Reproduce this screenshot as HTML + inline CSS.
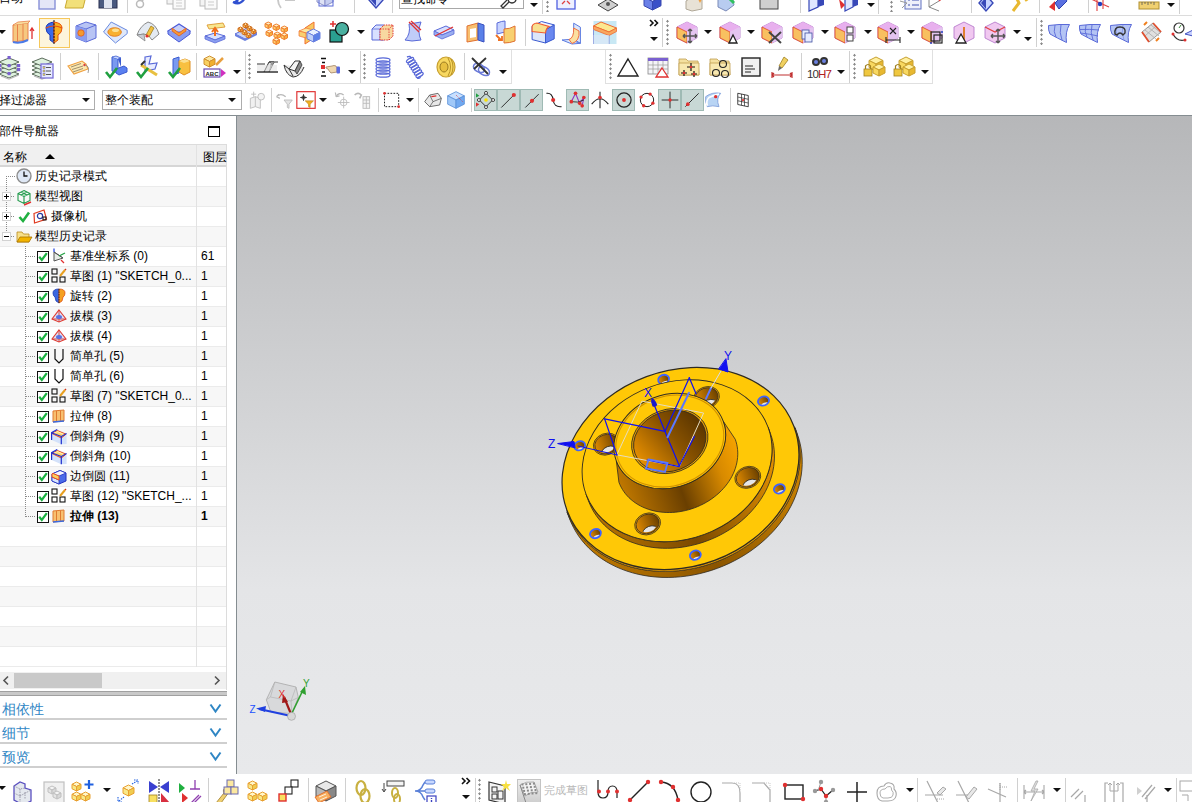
<!DOCTYPE html><html><head><meta charset="utf-8"><style>
*{box-sizing:border-box}
html,body{margin:0;padding:0}
body{width:1192px;height:802px;overflow:hidden;position:relative;background:#fff;font-family:"Liberation Sans",sans-serif;font-size:12px;color:#000}
.a{position:absolute}
.hl{position:absolute;height:1px;background:#dadada}
.vl{position:absolute;width:1px;background:#d4d4d4}
.ic{position:absolute;overflow:visible}
.dd{position:absolute;width:0;height:0;border-left:4px solid transparent;border-right:4px solid transparent;border-top:4px solid #111}
.grip{position:absolute;width:3px;background-image:radial-gradient(circle,#8a8a8a 1px,transparent 1.3px);background-size:3px 4.5px}
.row{position:absolute;left:0;width:226px;height:20px;border-bottom:1px solid #ececec}
.t{position:absolute;white-space:nowrap;line-height:14px}
.sel{position:absolute;background:#c8d8d5;border:1px solid #9fbab4}
</style></head><body>
<svg class="a" style="left:0;top:0" width="1192" height="802" viewBox="0 0 1192 802">
<defs>
<linearGradient id="vpg" x1="0" y1="116" x2="0" y2="774" gradientUnits="userSpaceOnUse"><stop offset="0" stop-color="#b6b7b9"/><stop offset="0.72" stop-color="#e4e5e7"/><stop offset="1" stop-color="#e8e9eb"/></linearGradient>
<linearGradient id="rimg" x1="566.9" y1="517.5" x2="797.6" y2="432.1" gradientUnits="userSpaceOnUse"><stop offset="0" stop-color="#c07a00"/><stop offset="0.5" stop-color="#8a5400"/><stop offset="1" stop-color="#d08600"/></linearGradient>
<linearGradient id="stepg" x1="588.5" y1="501.0" x2="770.5" y2="433.6" gradientUnits="userSpaceOnUse"><stop offset="0" stop-color="#b87400"/><stop offset="0.45" stop-color="#7a4800"/><stop offset="1" stop-color="#e89400"/></linearGradient>
<linearGradient id="hubg" x1="618.9" y1="482.3" x2="735.2" y2="439.2" gradientUnits="userSpaceOnUse"><stop offset="0" stop-color="#c07800"/><stop offset="0.45" stop-color="#6a3f00"/><stop offset="0.8" stop-color="#d88a00"/><stop offset="1" stop-color="#f5a200"/></linearGradient>
<linearGradient id="boreg" x1="635.1" y1="453.9" x2="704.5" y2="428.2" gradientUnits="userSpaceOnUse"><stop offset="0" stop-color="#e89000"/><stop offset="0.55" stop-color="#8a5300"/><stop offset="1" stop-color="#5a3500"/></linearGradient>
<linearGradient id="holeg" x1="0" y1="0" x2="1" y2="0"><stop offset="0" stop-color="#e08a00"/><stop offset="1" stop-color="#6a4000"/></linearGradient>
</defs>
<rect x="237" y="116" width="955" height="658" fill="url(#vpg)"/>
<path d="M794.97,427.73 L796.60,432.62 L797.91,437.61 L798.91,442.69 L799.58,447.84 L799.93,453.06 L799.95,458.32 L799.64,463.61 L799.01,468.92 L798.06,474.23 L796.78,479.53 L795.19,484.80 L793.28,490.04 L791.07,495.21 L788.56,500.32 L785.75,505.35 L782.65,510.27 L779.28,515.09 L775.63,519.79 L771.73,524.34 L767.58,528.75 L763.19,533.00 L758.57,537.07 L753.75,540.96 L748.72,544.65 L743.51,548.14 L738.13,551.42 L732.59,554.47 L726.91,557.29 L721.10,559.87 L715.18,562.20 L709.17,564.28 L703.08,566.11 L696.94,567.66 L690.75,568.95 L684.53,569.97 L678.30,570.72 L672.08,571.19 L665.88,571.38 L659.73,571.29 L653.63,570.92 L647.61,570.28 L641.68,569.37 L635.86,568.18 L630.16,566.72 L624.61,564.99 L619.20,563.01 L613.97,560.77 L608.92,558.28 L604.06,555.55 L599.42,552.58 L595.00,549.39 L590.82,545.98 L586.89,542.36 L583.21,538.54 L579.80,534.53 L576.67,530.35 L573.82,526.00 L571.27,521.50 L569.02,516.85 L567.08,512.08 L569.33,518.18 L571.28,522.95 L573.53,527.59 L576.08,532.10 L578.92,536.45 L582.06,540.63 L585.47,544.63 L589.14,548.45 L593.08,552.07 L597.26,555.48 L601.68,558.68 L606.32,561.64 L611.17,564.37 L616.22,566.86 L621.46,569.10 L626.86,571.09 L632.42,572.81 L638.12,574.27 L643.94,575.46 L649.87,576.38 L655.89,577.02 L661.99,577.39 L668.14,577.47 L674.34,577.28 L680.56,576.81 L686.78,576.07 L693.00,575.05 L699.19,573.76 L705.34,572.20 L711.43,570.38 L717.44,568.30 L723.36,565.96 L729.16,563.38 L734.84,560.56 L740.38,557.51 L745.77,554.24 L750.98,550.75 L756.00,547.05 L760.83,543.16 L765.45,539.09 L769.83,534.85 L773.99,530.44 L777.89,525.88 L781.53,521.19 L784.91,516.37 L788.00,511.44 L790.81,506.42 L793.33,501.31 L795.54,496.13 L797.45,490.90 L799.04,485.63 L800.31,480.33 L801.27,475.01 L801.90,469.70 L802.20,464.41 L802.18,459.15 L801.83,453.94 L801.16,448.78 L800.17,443.71 L798.85,438.72 L797.22,433.83Z" fill="url(#rimg)" stroke="#2e2a22" stroke-width="0.8"/>
<path d="M793.98,426.50 L795.60,431.37 L796.91,436.34 L797.90,441.39 L798.57,446.53 L798.92,451.72 L798.94,456.96 L798.63,462.23 L798.00,467.52 L797.05,472.81 L795.78,478.08 L794.20,483.34 L792.30,488.55 L790.10,493.70 L787.59,498.79 L784.80,503.79 L781.71,508.70 L778.35,513.50 L774.72,518.17 L770.84,522.71 L766.70,527.10 L762.33,531.33 L757.74,535.39 L752.93,539.26 L747.92,542.94 L742.73,546.41 L737.37,549.67 L731.85,552.71 L726.20,555.52 L720.41,558.09 L714.52,560.42 L708.54,562.49 L702.47,564.30 L696.35,565.85 L690.18,567.14 L683.99,568.15 L677.79,568.90 L671.60,569.36 L665.43,569.55 L659.30,569.47 L653.23,569.10 L647.23,568.46 L641.32,567.55 L635.53,566.36 L629.85,564.91 L624.32,563.19 L618.94,561.22 L613.72,558.99 L608.69,556.51 L603.86,553.79 L599.24,550.83 L594.84,547.65 L590.67,544.26 L586.75,540.65 L583.09,536.85 L579.70,532.86 L576.58,528.69 L573.74,524.36 L571.20,519.88 L568.96,515.25 L567.02,510.50 L567.08,512.08 L569.02,516.85 L571.27,521.50 L573.82,526.00 L576.67,530.35 L579.80,534.53 L583.21,538.54 L586.89,542.36 L590.82,545.98 L595.00,549.39 L599.42,552.58 L604.06,555.55 L608.92,558.28 L613.97,560.77 L619.20,563.01 L624.61,564.99 L630.16,566.72 L635.86,568.18 L641.68,569.37 L647.61,570.28 L653.63,570.92 L659.73,571.29 L665.88,571.38 L672.08,571.19 L678.30,570.72 L684.53,569.97 L690.75,568.95 L696.94,567.66 L703.08,566.11 L709.17,564.28 L715.18,562.20 L721.10,559.87 L726.91,557.29 L732.59,554.47 L738.13,551.42 L743.51,548.14 L748.72,544.65 L753.75,540.96 L758.57,537.07 L763.19,533.00 L767.58,528.75 L771.73,524.34 L775.63,519.79 L779.28,515.09 L782.65,510.27 L785.75,505.35 L788.56,500.32 L791.07,495.21 L793.28,490.04 L795.19,484.80 L796.78,479.53 L798.06,474.23 L799.01,468.92 L799.64,463.61 L799.95,458.32 L799.93,453.06 L799.58,447.84 L798.91,442.69 L797.91,437.61 L796.60,432.62 L794.97,427.73Z" fill="#e69a00" stroke="#2e2a22" stroke-width="0.6"/>
<ellipse cx="680.50" cy="468.50" rx="121.00" ry="98.01" transform="rotate(-20.31 680.50 468.50)" fill="#ffc806" stroke="#2e2a22" stroke-width="1.2" />
<clipPath id="sh0"><ellipse cx="663.62" cy="379.45" rx="5.20" ry="4.21" transform="rotate(-20.31 663.62 379.45)" fill="#000" stroke="none" stroke-width="1" /></clipPath>
<ellipse cx="663.62" cy="379.45" rx="5.20" ry="4.21" transform="rotate(-20.31 663.62 379.45)" fill="url(#holeg)" stroke="none" stroke-width="0" />
<g clip-path="url(#sh0)"><ellipse cx="665.52" cy="384.61" rx="4.50" ry="3.65" transform="rotate(-20.31 665.52 384.61)" fill="#e2e3e5" stroke="none" stroke-width="0" /></g>
<ellipse cx="663.62" cy="379.45" rx="5.60" ry="4.54" transform="rotate(-20.31 663.62 379.45)" fill="none" stroke="#3d63ff" stroke-width="1.8" />
<clipPath id="sh1"><ellipse cx="763.49" cy="401.02" rx="5.20" ry="4.21" transform="rotate(-20.31 763.49 401.02)" fill="#000" stroke="none" stroke-width="1" /></clipPath>
<ellipse cx="763.49" cy="401.02" rx="5.20" ry="4.21" transform="rotate(-20.31 763.49 401.02)" fill="url(#holeg)" stroke="none" stroke-width="0" />
<g clip-path="url(#sh1)"><ellipse cx="765.40" cy="406.17" rx="4.50" ry="3.65" transform="rotate(-20.31 765.40 406.17)" fill="#e2e3e5" stroke="none" stroke-width="0" /></g>
<ellipse cx="763.49" cy="401.02" rx="5.60" ry="4.54" transform="rotate(-20.31 763.49 401.02)" fill="none" stroke="#3d63ff" stroke-width="1.8" />
<clipPath id="sh2"><ellipse cx="779.37" cy="488.86" rx="5.20" ry="4.21" transform="rotate(-20.31 779.37 488.86)" fill="#000" stroke="none" stroke-width="1" /></clipPath>
<ellipse cx="779.37" cy="488.86" rx="5.20" ry="4.21" transform="rotate(-20.31 779.37 488.86)" fill="url(#holeg)" stroke="none" stroke-width="0" />
<g clip-path="url(#sh2)"><ellipse cx="781.28" cy="494.02" rx="4.50" ry="3.65" transform="rotate(-20.31 781.28 494.02)" fill="#e2e3e5" stroke="none" stroke-width="0" /></g>
<ellipse cx="779.37" cy="488.86" rx="5.60" ry="4.54" transform="rotate(-20.31 779.37 488.86)" fill="none" stroke="#3d63ff" stroke-width="1.8" />
<clipPath id="sh3"><ellipse cx="695.38" cy="555.15" rx="5.20" ry="4.21" transform="rotate(-20.31 695.38 555.15)" fill="#000" stroke="none" stroke-width="1" /></clipPath>
<ellipse cx="695.38" cy="555.15" rx="5.20" ry="4.21" transform="rotate(-20.31 695.38 555.15)" fill="url(#holeg)" stroke="none" stroke-width="0" />
<g clip-path="url(#sh3)"><ellipse cx="697.29" cy="560.30" rx="4.50" ry="3.65" transform="rotate(-20.31 697.29 560.30)" fill="#e2e3e5" stroke="none" stroke-width="0" /></g>
<ellipse cx="695.38" cy="555.15" rx="5.60" ry="4.54" transform="rotate(-20.31 695.38 555.15)" fill="none" stroke="#3d63ff" stroke-width="1.8" />
<clipPath id="sh4"><ellipse cx="595.51" cy="533.58" rx="5.20" ry="4.21" transform="rotate(-20.31 595.51 533.58)" fill="#000" stroke="none" stroke-width="1" /></clipPath>
<ellipse cx="595.51" cy="533.58" rx="5.20" ry="4.21" transform="rotate(-20.31 595.51 533.58)" fill="url(#holeg)" stroke="none" stroke-width="0" />
<g clip-path="url(#sh4)"><ellipse cx="597.42" cy="538.74" rx="4.50" ry="3.65" transform="rotate(-20.31 597.42 538.74)" fill="#e2e3e5" stroke="none" stroke-width="0" /></g>
<ellipse cx="595.51" cy="533.58" rx="5.60" ry="4.54" transform="rotate(-20.31 595.51 533.58)" fill="none" stroke="#3d63ff" stroke-width="1.8" />
<clipPath id="sh5"><ellipse cx="579.63" cy="445.74" rx="5.20" ry="4.21" transform="rotate(-20.31 579.63 445.74)" fill="#000" stroke="none" stroke-width="1" /></clipPath>
<ellipse cx="579.63" cy="445.74" rx="5.20" ry="4.21" transform="rotate(-20.31 579.63 445.74)" fill="url(#holeg)" stroke="none" stroke-width="0" />
<g clip-path="url(#sh5)"><ellipse cx="581.54" cy="450.90" rx="4.50" ry="3.65" transform="rotate(-20.31 581.54 450.90)" fill="#e2e3e5" stroke="none" stroke-width="0" /></g>
<ellipse cx="579.63" cy="445.74" rx="5.60" ry="4.54" transform="rotate(-20.31 579.63 445.74)" fill="none" stroke="#3d63ff" stroke-width="1.8" />
<path d="M768.04,427.06 L769.34,430.97 L770.39,434.95 L771.19,439.01 L771.72,443.12 L772.00,447.28 L772.01,451.48 L771.77,455.71 L771.27,459.95 L770.51,464.19 L769.49,468.42 L768.22,472.63 L766.70,476.81 L764.93,480.94 L762.92,485.02 L760.68,489.03 L758.21,492.96 L755.51,496.81 L752.60,500.56 L749.49,504.19 L746.17,507.71 L742.67,511.10 L738.99,514.35 L735.13,517.46 L731.12,520.41 L726.96,523.19 L722.66,525.81 L718.24,528.25 L713.70,530.50 L709.07,532.56 L704.34,534.42 L699.55,536.08 L694.69,537.54 L689.78,538.78 L684.83,539.81 L679.87,540.62 L674.90,541.22 L669.93,541.59 L664.99,541.74 L660.07,541.67 L655.21,541.38 L650.40,540.87 L645.66,540.14 L641.02,539.19 L636.47,538.02 L632.03,536.65 L627.72,535.06 L623.54,533.27 L619.51,531.29 L615.63,529.11 L611.93,526.74 L608.40,524.19 L605.06,521.47 L601.92,518.58 L598.98,515.53 L596.26,512.33 L593.76,508.99 L591.49,505.52 L589.45,501.92 L587.65,498.22 L586.10,494.41 L588.53,500.97 L590.08,504.78 L591.88,508.49 L593.92,512.08 L596.19,515.55 L598.69,518.89 L601.41,522.09 L604.35,525.14 L607.49,528.03 L610.83,530.75 L614.36,533.30 L618.06,535.67 L621.94,537.85 L625.97,539.84 L630.15,541.63 L634.46,543.21 L638.90,544.59 L643.45,545.75 L648.09,546.70 L652.83,547.44 L657.64,547.95 L662.50,548.24 L667.42,548.31 L672.36,548.16 L677.33,547.78 L682.30,547.19 L687.26,546.37 L692.21,545.34 L697.12,544.10 L701.98,542.65 L706.77,540.98 L711.50,539.12 L716.13,537.06 L720.67,534.81 L725.09,532.37 L729.39,529.76 L733.55,526.97 L737.56,524.02 L741.42,520.92 L745.10,517.67 L748.60,514.28 L751.92,510.76 L755.03,507.12 L757.94,503.37 L760.64,499.53 L763.11,495.59 L765.35,491.58 L767.36,487.50 L769.13,483.37 L770.65,479.19 L771.92,474.98 L772.94,470.75 L773.70,466.51 L774.20,462.27 L774.44,458.05 L774.43,453.85 L774.15,449.68 L773.62,445.57 L772.82,441.52 L771.77,437.53 L770.47,433.63Z" fill="url(#stepg)" stroke="#2e2a22" stroke-width="0.8"/>
<ellipse cx="677.07" cy="460.74" rx="97.00" ry="78.57" transform="rotate(-20.31 677.07 460.74)" fill="#ffc806" stroke="#2e2a22" stroke-width="0.9" />
<clipPath id="lh0"><ellipse cx="606.35" cy="444.13" rx="10.00" ry="8.10" transform="rotate(-20.31 606.35 444.13)" fill="#000" stroke="none" stroke-width="1" /></clipPath>
<ellipse cx="606.35" cy="444.13" rx="13.20" ry="10.69" transform="rotate(-20.31 606.35 444.13)" fill="#f0a400" stroke="#2e2a22" stroke-width="0.7" />
<ellipse cx="606.35" cy="444.13" rx="11.80" ry="9.56" transform="rotate(-20.31 606.35 444.13)" fill="url(#holeg)" stroke="#2e2a22" stroke-width="0.7" />
<g clip-path="url(#lh0)"><ellipse cx="609.82" cy="453.51" rx="9.00" ry="7.29" transform="rotate(-20.31 609.82 453.51)" fill="#e4e5e7" stroke="#2e2a22" stroke-width="0.8" /></g>
<clipPath id="lh1"><ellipse cx="706.50" cy="397.54" rx="10.00" ry="8.10" transform="rotate(-20.31 706.50 397.54)" fill="#000" stroke="none" stroke-width="1" /></clipPath>
<ellipse cx="706.50" cy="397.54" rx="13.20" ry="10.69" transform="rotate(-20.31 706.50 397.54)" fill="#f0a400" stroke="#2e2a22" stroke-width="0.7" />
<ellipse cx="706.50" cy="397.54" rx="11.80" ry="9.56" transform="rotate(-20.31 706.50 397.54)" fill="url(#holeg)" stroke="#2e2a22" stroke-width="0.7" />
<g clip-path="url(#lh1)"><ellipse cx="709.97" cy="406.91" rx="9.00" ry="7.29" transform="rotate(-20.31 709.97 406.91)" fill="#e4e5e7" stroke="#2e2a22" stroke-width="0.8" /></g>
<clipPath id="lh2"><ellipse cx="747.79" cy="477.34" rx="10.00" ry="8.10" transform="rotate(-20.31 747.79 477.34)" fill="#000" stroke="none" stroke-width="1" /></clipPath>
<ellipse cx="747.79" cy="477.34" rx="13.20" ry="10.69" transform="rotate(-20.31 747.79 477.34)" fill="#f0a400" stroke="#2e2a22" stroke-width="0.7" />
<ellipse cx="747.79" cy="477.34" rx="11.80" ry="9.56" transform="rotate(-20.31 747.79 477.34)" fill="url(#holeg)" stroke="#2e2a22" stroke-width="0.7" />
<g clip-path="url(#lh2)"><ellipse cx="751.27" cy="486.72" rx="9.00" ry="7.29" transform="rotate(-20.31 751.27 486.72)" fill="#e4e5e7" stroke="#2e2a22" stroke-width="0.8" /></g>
<clipPath id="lh3"><ellipse cx="647.64" cy="523.93" rx="10.00" ry="8.10" transform="rotate(-20.31 647.64 523.93)" fill="#000" stroke="none" stroke-width="1" /></clipPath>
<ellipse cx="647.64" cy="523.93" rx="13.20" ry="10.69" transform="rotate(-20.31 647.64 523.93)" fill="#f0a400" stroke="#2e2a22" stroke-width="0.7" />
<ellipse cx="647.64" cy="523.93" rx="11.80" ry="9.56" transform="rotate(-20.31 647.64 523.93)" fill="url(#holeg)" stroke="#2e2a22" stroke-width="0.7" />
<g clip-path="url(#lh3)"><ellipse cx="651.11" cy="533.31" rx="9.00" ry="7.29" transform="rotate(-20.31 651.11 533.31)" fill="#e4e5e7" stroke="#2e2a22" stroke-width="0.8" /></g>
<path d="M723.24,421.26 L724.00,423.55 L724.62,425.89 L725.09,428.27 L725.40,430.69 L725.56,433.14 L725.57,435.60 L725.43,438.09 L725.13,440.58 L724.69,443.07 L724.09,445.56 L723.34,448.03 L722.45,450.48 L721.41,452.91 L720.23,455.31 L718.91,457.67 L717.46,459.98 L715.88,462.24 L714.17,464.44 L712.34,466.58 L710.39,468.65 L708.33,470.64 L706.16,472.55 L703.90,474.37 L701.54,476.11 L699.10,477.74 L696.57,479.28 L693.97,480.71 L691.31,482.03 L688.58,483.25 L685.81,484.34 L682.99,485.32 L680.13,486.17 L677.25,486.90 L674.34,487.51 L671.43,487.99 L668.50,488.34 L665.59,488.55 L662.68,488.64 L659.79,488.60 L656.93,488.43 L654.11,488.13 L651.33,487.70 L648.59,487.14 L645.92,486.46 L643.31,485.65 L640.78,484.72 L638.32,483.67 L635.95,482.50 L633.68,481.22 L631.50,479.83 L629.43,478.33 L627.46,476.73 L625.62,475.03 L623.89,473.24 L622.29,471.36 L620.83,469.40 L619.49,467.36 L618.29,465.24 L617.24,463.07 L616.32,460.83 L618.93,482.26 L619.92,484.69 L621.07,487.06 L622.37,489.36 L623.82,491.58 L625.42,493.71 L627.16,495.76 L629.03,497.71 L631.04,499.55 L633.18,501.29 L635.43,502.92 L637.80,504.44 L640.28,505.83 L642.85,507.10 L645.52,508.24 L648.28,509.26 L651.12,510.14 L654.03,510.88 L657.00,511.49 L660.02,511.96 L663.09,512.28 L666.21,512.47 L669.35,512.51 L672.51,512.42 L675.68,512.18 L678.86,511.80 L682.03,511.28 L685.19,510.62 L688.33,509.82 L691.44,508.89 L694.50,507.83 L697.52,506.64 L700.48,505.32 L703.38,503.89 L706.21,502.33 L708.96,500.66 L711.62,498.88 L714.18,496.99 L716.65,495.01 L719.00,492.93 L721.24,490.76 L723.36,488.51 L725.35,486.19 L727.21,483.79 L728.93,481.33 L730.51,478.82 L731.94,476.26 L733.23,473.65 L734.36,471.01 L735.33,468.34 L736.14,465.65 L736.79,462.94 L737.28,460.23 L737.60,457.52 L737.76,454.82 L737.75,452.14 L737.57,449.48 L737.23,446.85 L736.72,444.25 L736.05,441.71 L735.21,439.21Z" fill="url(#hubg)" stroke="#2e2a22" stroke-width="0.8"/>
<ellipse cx="669.78" cy="441.04" rx="57.00" ry="46.17" transform="rotate(-20.31 669.78 441.04)" fill="#ffc806" stroke="#2e2a22" stroke-width="0.9" />
<ellipse cx="669.78" cy="441.04" rx="55.00" ry="44.55" transform="rotate(-20.31 669.78 441.04)" fill="none" stroke="#d09000" stroke-width="1.1" />
<ellipse cx="669.78" cy="441.04" rx="39.00" ry="31.59" transform="rotate(-20.31 669.78 441.04)" fill="#e9a000" stroke="#2e2a22" stroke-width="0.8" />
<ellipse cx="669.78" cy="441.04" rx="37.00" ry="29.97" transform="rotate(-20.31 669.78 441.04)" fill="url(#boreg)" stroke="#2e2a22" stroke-width="0.8" />
<g stroke-linecap="round">
<path d="M642.3,401.2 L703.6,413 L679.3,466.6 L617.2,454.9 Z" fill="none" stroke="#e6dcc0" stroke-width="1"/>
<line x1="604.6" y1="418.8" x2="665" y2="431.4" stroke="#1010f0" stroke-width="1.2"/>
<line x1="604.6" y1="418.8" x2="617" y2="455" stroke="#1010f0" stroke-width="1.2"/>
<line x1="665" y1="431.4" x2="689.3" y2="377.7" stroke="#1010f0" stroke-width="1.2"/>
<line x1="689.3" y1="377.7" x2="696" y2="393.7" stroke="#1010f0" stroke-width="1.2"/>
<line x1="665" y1="431.4" x2="679.3" y2="465.8" stroke="#1010f0" stroke-width="1.2"/>
<line x1="679.3" y1="465.8" x2="694.4" y2="436.4" stroke="#1010f0" stroke-width="1.2"/>
<line x1="647" y1="460" x2="679.3" y2="466.6" stroke="#1010f0" stroke-width="1.2"/>
<line x1="578" y1="446" x2="617" y2="455" stroke="#1010f0" stroke-width="1"/>
<line x1="665" y1="431.4" x2="653" y2="402" stroke="#1010f0" stroke-width="1.2"/>
<path d="M652,398.5 Q656,402 656.5,405 Q655,406.5 653,406 Q651,402 652,398.5 Z" fill="#1a1ac8" stroke="#1a1ac8" stroke-width="1.2"/>
<line x1="667.5" y1="437.3" x2="689" y2="392.8" stroke="#5a78ff" stroke-width="2"/>
<line x1="706" y1="398.7" x2="711" y2="388" stroke="#5a78ff" stroke-width="2"/>
<line x1="711" y1="388" x2="721" y2="371" stroke="#d8dcf0" stroke-width="1"/>
<path d="M726,359 L728,372 L719,369 Z" fill="#1010f0" stroke="#1010f0" stroke-width="1"/>
<path d="M558,443.5 L574,441.5 L575,447.5 Z" fill="#1010f0" stroke="#1010f0" stroke-width="1"/>
<path d="M648.5,459.5 L667.5,463 L665,472 L646,468.5 Z" fill="none" stroke="#5a78ff" stroke-width="1.8"/>
</g>
<text x="548" y="447.5" font-family="Liberation Sans" font-size="12" fill="#1010f0">Z</text>
<text x="644" y="397" font-family="Liberation Sans" font-size="12" fill="#1010f0">X</text>
<text x="724" y="360" font-family="Liberation Sans" font-size="12" fill="#1010f0">Y</text>
<g>
<path d="M274.8,682 L296,687 L298.3,697.4 L291.9,713.6 L270.8,712 L266.3,699.8 Z" fill="#d6d7d9" fill-opacity="0.9" stroke="#a8a8a8" stroke-width="0.8"/>
<path d="M274.8,682 L270.5,697 L291,701 L296,687 M270.5,697 L266.3,699.8 M291,701 L298.3,697.4 M291,701 L291.9,713.6" fill="none" stroke="#b4b4b4" stroke-width="0.7"/>
<line x1="291" y1="716" x2="259" y2="709" stroke="#2040e0" stroke-width="2"/>
<path d="M256,708.5 L266,706 L265,712 Z" fill="#2040e0"/>
<line x1="292" y1="713" x2="303" y2="690" stroke="#30a030" stroke-width="1.6"/>
<path d="M305,686 L306,695 L300,692 Z" fill="#30a030"/>
<line x1="291" y1="714" x2="284" y2="697" stroke="#a01818" stroke-width="2.2"/>
<path d="M283,694 L288,702 L282,703 Z" fill="#a01818"/>
<circle cx="291.5" cy="716.3" r="4" fill="#d8d8d8" stroke="#999" stroke-width="0.6"/>
<text x="249.5" y="713" font-family="Liberation Sans" font-size="10" fill="#2050ff">Z</text>
<text x="278.5" y="697.5" font-family="Liberation Sans" font-size="10" fill="#e03030">X</text>
<text x="303" y="687" font-family="Liberation Sans" font-size="10" fill="#30a030">Y</text>
</g>
</svg>
<div class="hl" style="left:0;top:15px;width:1192px;background:#dcdcdc"></div>
<div class="hl" style="left:0;top:49px;width:1192px;background:#dcdcdc"></div>
<div class="hl" style="left:0;top:83px;width:512px;background:#e0e0e0"></div>
<div class="hl" style="left:605px;top:83px;width:328px;background:#e0e0e0"></div>
<div class="vl" style="left:511px;top:50px;height:34px;background:#e0e0e0"></div>
<div class="vl" style="left:605px;top:50px;height:34px;background:#e0e0e0"></div>
<div class="vl" style="left:932px;top:50px;height:34px;background:#e0e0e0"></div>
<div class="a" style="left:0;top:115px;width:1192px;height:1px;background:#858d91"></div>
<div class="a" style="left:236px;top:116px;width:1px;height:658px;background:#858d91"></div>
<div class="t" style="left:-1px;top:123.5px;font-size:12px;color:#000;font-weight:normal;">部件导航器</div>
<div class="a" style="left:208px;top:126px;width:12px;height:11px;border:1px solid #000;border-top-width:2px"></div>
<div class="a" style="left:0;top:144px;width:227px;height:1px;background:#dcdcdc"></div>
<div class="a" style="left:226px;top:144px;width:1px;height:546px;background:#dcdcdc"></div>
<div class="a" style="left:0;top:145px;width:226px;height:21px;background:#f0f0f0"></div>
<div class="a" style="left:0;top:165px;width:226px;height:2px;background:#d6d6d6"></div>
<div class="a" style="left:0;top:167px;width:226px;height:19px;background:#ffffff"></div>
<div class="a" style="left:0;top:186px;width:226px;height:1px;background:#ebebeb"></div>
<div class="a" style="left:0;top:187px;width:226px;height:19px;background:#f7f7f7"></div>
<div class="a" style="left:0;top:206px;width:226px;height:1px;background:#ebebeb"></div>
<div class="a" style="left:0;top:207px;width:226px;height:19px;background:#ffffff"></div>
<div class="a" style="left:0;top:226px;width:226px;height:1px;background:#ebebeb"></div>
<div class="a" style="left:0;top:227px;width:226px;height:19px;background:#f7f7f7"></div>
<div class="a" style="left:0;top:246px;width:226px;height:1px;background:#ebebeb"></div>
<div class="a" style="left:0;top:247px;width:226px;height:19px;background:#ffffff"></div>
<div class="a" style="left:0;top:266px;width:226px;height:1px;background:#ebebeb"></div>
<div class="a" style="left:0;top:267px;width:226px;height:19px;background:#f7f7f7"></div>
<div class="a" style="left:0;top:286px;width:226px;height:1px;background:#ebebeb"></div>
<div class="a" style="left:0;top:287px;width:226px;height:19px;background:#ffffff"></div>
<div class="a" style="left:0;top:306px;width:226px;height:1px;background:#ebebeb"></div>
<div class="a" style="left:0;top:307px;width:226px;height:19px;background:#f7f7f7"></div>
<div class="a" style="left:0;top:326px;width:226px;height:1px;background:#ebebeb"></div>
<div class="a" style="left:0;top:327px;width:226px;height:19px;background:#ffffff"></div>
<div class="a" style="left:0;top:346px;width:226px;height:1px;background:#ebebeb"></div>
<div class="a" style="left:0;top:347px;width:226px;height:19px;background:#f7f7f7"></div>
<div class="a" style="left:0;top:366px;width:226px;height:1px;background:#ebebeb"></div>
<div class="a" style="left:0;top:367px;width:226px;height:19px;background:#ffffff"></div>
<div class="a" style="left:0;top:386px;width:226px;height:1px;background:#ebebeb"></div>
<div class="a" style="left:0;top:387px;width:226px;height:19px;background:#f7f7f7"></div>
<div class="a" style="left:0;top:406px;width:226px;height:1px;background:#ebebeb"></div>
<div class="a" style="left:0;top:407px;width:226px;height:19px;background:#ffffff"></div>
<div class="a" style="left:0;top:426px;width:226px;height:1px;background:#ebebeb"></div>
<div class="a" style="left:0;top:427px;width:226px;height:19px;background:#f7f7f7"></div>
<div class="a" style="left:0;top:446px;width:226px;height:1px;background:#ebebeb"></div>
<div class="a" style="left:0;top:447px;width:226px;height:19px;background:#ffffff"></div>
<div class="a" style="left:0;top:466px;width:226px;height:1px;background:#ebebeb"></div>
<div class="a" style="left:0;top:467px;width:226px;height:19px;background:#f7f7f7"></div>
<div class="a" style="left:0;top:486px;width:226px;height:1px;background:#ebebeb"></div>
<div class="a" style="left:0;top:487px;width:226px;height:19px;background:#ffffff"></div>
<div class="a" style="left:0;top:506px;width:226px;height:1px;background:#ebebeb"></div>
<div class="a" style="left:0;top:507px;width:226px;height:19px;background:#f7f7f7"></div>
<div class="a" style="left:0;top:526px;width:226px;height:1px;background:#ebebeb"></div>
<div class="a" style="left:0;top:527px;width:226px;height:19px;background:#ffffff"></div>
<div class="a" style="left:0;top:546px;width:226px;height:1px;background:#ebebeb"></div>
<div class="a" style="left:0;top:547px;width:226px;height:19px;background:#f7f7f7"></div>
<div class="a" style="left:0;top:566px;width:226px;height:1px;background:#ebebeb"></div>
<div class="a" style="left:0;top:567px;width:226px;height:19px;background:#ffffff"></div>
<div class="a" style="left:0;top:586px;width:226px;height:1px;background:#ebebeb"></div>
<div class="a" style="left:0;top:587px;width:226px;height:19px;background:#f7f7f7"></div>
<div class="a" style="left:0;top:606px;width:226px;height:1px;background:#ebebeb"></div>
<div class="a" style="left:0;top:607px;width:226px;height:19px;background:#ffffff"></div>
<div class="a" style="left:0;top:626px;width:226px;height:1px;background:#ebebeb"></div>
<div class="a" style="left:0;top:627px;width:226px;height:19px;background:#f7f7f7"></div>
<div class="a" style="left:0;top:646px;width:226px;height:1px;background:#ebebeb"></div>
<div class="a" style="left:0;top:647px;width:226px;height:19px;background:#ffffff"></div>
<div class="a" style="left:0;top:666px;width:226px;height:1px;background:#ebebeb"></div>
<div class="a" style="left:196px;top:145px;width:1px;height:522px;background:#e2e2e2"></div>
<div class="t" style="left:3px;top:149.5px;font-size:12px;color:#000;font-weight:normal;">名称</div>
<div class="a" style="left:45px;top:154px;width:0;height:0;border-left:5px solid transparent;border-right:5px solid transparent;border-bottom:5px solid #000"></div>
<div class="t" style="left:203px;top:149.5px;font-size:12px;color:#000;font-weight:normal;">图层</div>
<div class="a" style="left:6px;top:176px;width:1px;height:61px;background-image:linear-gradient(#8a8a8a 50%,transparent 50%);background-size:1px 2px"></div>
<div class="a" style="left:6px;top:176px;width:9px;height:1px;background-image:linear-gradient(90deg,#8a8a8a 50%,transparent 50%);background-size:2px 1px"></div>
<div class="a" style="left:2px;top:192px;width:9px;height:9px;border:1px solid #d2d2d2;background:#fff"></div><div class="a" style="left:4px;top:196px;width:5px;height:1px;background:#000"></div><div class="a" style="left:6px;top:194px;width:1px;height:5px;background:#000"></div>
<div class="a" style="left:11px;top:196px;width:4px;height:1px;background-image:linear-gradient(90deg,#8a8a8a 50%,transparent 50%);background-size:2px 1px"></div>
<div class="a" style="left:2px;top:212px;width:9px;height:9px;border:1px solid #d2d2d2;background:#fff"></div><div class="a" style="left:4px;top:216px;width:5px;height:1px;background:#000"></div><div class="a" style="left:6px;top:214px;width:1px;height:5px;background:#000"></div>
<div class="a" style="left:11px;top:216px;width:4px;height:1px;background-image:linear-gradient(90deg,#8a8a8a 50%,transparent 50%);background-size:2px 1px"></div>
<div class="a" style="left:2px;top:232px;width:9px;height:9px;border:1px solid #d2d2d2;background:#fff"></div><div class="a" style="left:4px;top:236px;width:5px;height:1px;background:#000"></div>
<div class="a" style="left:11px;top:236px;width:4px;height:1px;background-image:linear-gradient(90deg,#8a8a8a 50%,transparent 50%);background-size:2px 1px"></div>
<div class="a" style="left:25px;top:246px;width:1px;height:271px;background-image:linear-gradient(#8a8a8a 50%,transparent 50%);background-size:1px 2px"></div>
<svg class="ic" style="left:16px;top:168px" width="16" height="16" viewBox="0 0 16 16"><circle cx="8" cy="8" r="7" fill="#dfe8f5" stroke="#8d8d8d" stroke-width="1.4"/><path d="M8,3.5 V8 H11.5" stroke="#111" stroke-width="1.3" fill="none"/></svg>
<div class="t" style="left:35px;top:169px;font-size:12px;color:#000;font-weight:normal;">历史记录模式</div>
<svg class="ic" style="left:16px;top:189px" width="16" height="16" viewBox="0 0 16 16"><path d="M8,1.5 L14,4.5 L14,11.5 L8,14.5 L2,11.5 L2,4.5 Z M2,4.5 L8,7.5 L14,4.5 M8,7.5 V14.5 M5,3 L11,6 M11,3 L5,6" fill="none" stroke="#1f9a4a" stroke-width="1.1"/><path d="M8,16 L15,13" stroke="#e53030" stroke-width="1.4"/></svg>
<div class="t" style="left:35px;top:189px;font-size:12px;color:#000;font-weight:normal;">模型视图</div>
<svg class="ic" style="left:18px;top:210px" width="13" height="13" viewBox="0 0 13 13"><path d="M1.5,7 L5,11 L11,2.5" fill="none" stroke="#20b040" stroke-width="2.6"/></svg>
<svg class="ic" style="left:33px;top:209px" width="15" height="15" viewBox="0 0 15 15"><path d="M1,4.5 L11,1 L13.5,10 L1.5,14 Z" fill="#fff" stroke="#e03a20" stroke-width="1.2"/><circle cx="7" cy="7" r="2.6" fill="none" stroke="#2a3aa0" stroke-width="1.2"/><rect x="10" y="8" width="3" height="3" fill="none" stroke="#111" stroke-width="1"/></svg>
<div class="t" style="left:51px;top:209px;font-size:12px;color:#000;font-weight:normal;">摄像机</div>
<svg class="ic" style="left:16px;top:229px" width="16" height="16" viewBox="0 0 16 16"><path d="M1,3 L6,3 L7.5,5 L13,5 L13,13 L1,13 Z" fill="#f7e08a" stroke="#b98a20" stroke-width="0.8"/><path d="M1,13 L4,8 L16,8 L13,13 Z" fill="#f2b400" stroke="#a87400" stroke-width="0.8"/></svg>
<div class="t" style="left:35px;top:229px;font-size:12px;color:#000;font-weight:normal;">模型历史记录</div>
<div class="a" style="left:26px;top:256px;width:9px;height:1px;background-image:linear-gradient(90deg,#8a8a8a 50%,transparent 50%);background-size:2px 1px"></div>
<svg class="ic" style="left:37px;top:251px" width="12" height="12" viewBox="0 0 12 12"><rect x="0.5" y="0.5" width="11" height="11" fill="#fff" stroke="#111" stroke-width="1"/><path d="M2.2,5.8 L4.8,9 L9.8,2.2" fill="none" stroke="#19b040" stroke-width="2.2"/></svg>
<svg class="ic" style="left:51px;top:248px" width="16" height="16" viewBox="0 0 16 16"><path d="M3,4 L3,13 L12,10 Z M3,4 L12,10" fill="#e8ede8" stroke="#555" stroke-width="1"/><path d="M3,4 V0.5" stroke="#2040e0" stroke-width="1.2"/><path d="M8,8 L14,5" stroke="#20a040" stroke-width="1.2"/><path d="M10,12 L13,15" stroke="#e03030" stroke-width="1.2"/></svg>
<div class="t" style="left:70px;top:249px;font-size:12px;color:#000;font-weight:normal;">基准坐标系 (0)</div>
<div class="t" style="left:201px;top:249px;font-size:12px;color:#000;font-weight:normal;">61</div>
<div class="a" style="left:26px;top:276px;width:9px;height:1px;background-image:linear-gradient(90deg,#8a8a8a 50%,transparent 50%);background-size:2px 1px"></div>
<svg class="ic" style="left:37px;top:271px" width="12" height="12" viewBox="0 0 12 12"><rect x="0.5" y="0.5" width="11" height="11" fill="#fff" stroke="#111" stroke-width="1"/><path d="M2.2,5.8 L4.8,9 L9.8,2.2" fill="none" stroke="#19b040" stroke-width="2.2"/></svg>
<svg class="ic" style="left:51px;top:268px" width="16" height="16" viewBox="0 0 16 16"><rect x="1" y="1" width="5" height="5" fill="none" stroke="#111" stroke-width="1.1"/><rect x="1" y="9" width="5" height="5" fill="none" stroke="#111" stroke-width="1.1"/><rect x="9" y="9" width="5" height="5" fill="none" stroke="#111" stroke-width="1.1"/><path d="M9,8 L14,2" stroke="#e8a020" stroke-width="2"/><path d="M14,2 L15,1" stroke="#d03020" stroke-width="1.5"/></svg>
<div class="t" style="left:70px;top:269px;font-size:12px;color:#000;font-weight:normal;">草图 (1) "SKETCH_0...</div>
<div class="t" style="left:201px;top:269px;font-size:12px;color:#000;font-weight:normal;">1</div>
<div class="a" style="left:26px;top:296px;width:9px;height:1px;background-image:linear-gradient(90deg,#8a8a8a 50%,transparent 50%);background-size:2px 1px"></div>
<svg class="ic" style="left:37px;top:291px" width="12" height="12" viewBox="0 0 12 12"><rect x="0.5" y="0.5" width="11" height="11" fill="#fff" stroke="#111" stroke-width="1"/><path d="M2.2,5.8 L4.8,9 L9.8,2.2" fill="none" stroke="#19b040" stroke-width="2.2"/></svg>
<svg class="ic" style="left:51px;top:288px" width="16" height="16" viewBox="0 0 16 16"><path d="M2,5 Q2,1 8,1 L8,15 L5,13 L4,9 Q2,8 2,5 Z" fill="#3a66e0" stroke="#1a3ab0" stroke-width="0.8"/><path d="M8,1 Q14,1 14,5 Q14,8 12,9 L11,13 L8,15 Z" fill="#f5a020" stroke="#e05010" stroke-width="0.8"/><path d="M8,1 V15" stroke="#222" stroke-width="0.8" stroke-dasharray="1.5 1"/></svg>
<div class="t" style="left:70px;top:289px;font-size:12px;color:#000;font-weight:normal;">旋转 (2)</div>
<div class="t" style="left:201px;top:289px;font-size:12px;color:#000;font-weight:normal;">1</div>
<div class="a" style="left:26px;top:316px;width:9px;height:1px;background-image:linear-gradient(90deg,#8a8a8a 50%,transparent 50%);background-size:2px 1px"></div>
<svg class="ic" style="left:37px;top:311px" width="12" height="12" viewBox="0 0 12 12"><rect x="0.5" y="0.5" width="11" height="11" fill="#fff" stroke="#111" stroke-width="1"/><path d="M2.2,5.8 L4.8,9 L9.8,2.2" fill="none" stroke="#19b040" stroke-width="2.2"/></svg>
<svg class="ic" style="left:51px;top:308px" width="16" height="16" viewBox="0 0 16 16"><path d="M8,2 L15,11 L8,14 L1,11 Z" fill="#d8e0f8" stroke="#e03a30" stroke-width="1.1"/><path d="M8,2 V14 M1,11 L15,11" stroke="#e03a30" stroke-width="0.9"/><ellipse cx="8" cy="9" rx="3" ry="2" fill="#5a70e0"/></svg>
<div class="t" style="left:70px;top:309px;font-size:12px;color:#000;font-weight:normal;">拔模 (3)</div>
<div class="t" style="left:201px;top:309px;font-size:12px;color:#000;font-weight:normal;">1</div>
<div class="a" style="left:26px;top:336px;width:9px;height:1px;background-image:linear-gradient(90deg,#8a8a8a 50%,transparent 50%);background-size:2px 1px"></div>
<svg class="ic" style="left:37px;top:331px" width="12" height="12" viewBox="0 0 12 12"><rect x="0.5" y="0.5" width="11" height="11" fill="#fff" stroke="#111" stroke-width="1"/><path d="M2.2,5.8 L4.8,9 L9.8,2.2" fill="none" stroke="#19b040" stroke-width="2.2"/></svg>
<svg class="ic" style="left:51px;top:328px" width="16" height="16" viewBox="0 0 16 16"><path d="M8,2 L15,11 L8,14 L1,11 Z" fill="#d8e0f8" stroke="#e03a30" stroke-width="1.1"/><path d="M8,2 V14 M1,11 L15,11" stroke="#e03a30" stroke-width="0.9"/><ellipse cx="8" cy="9" rx="3" ry="2" fill="#5a70e0"/></svg>
<div class="t" style="left:70px;top:329px;font-size:12px;color:#000;font-weight:normal;">拔模 (4)</div>
<div class="t" style="left:201px;top:329px;font-size:12px;color:#000;font-weight:normal;">1</div>
<div class="a" style="left:26px;top:356px;width:9px;height:1px;background-image:linear-gradient(90deg,#8a8a8a 50%,transparent 50%);background-size:2px 1px"></div>
<svg class="ic" style="left:37px;top:351px" width="12" height="12" viewBox="0 0 12 12"><rect x="0.5" y="0.5" width="11" height="11" fill="#fff" stroke="#111" stroke-width="1"/><path d="M2.2,5.8 L4.8,9 L9.8,2.2" fill="none" stroke="#19b040" stroke-width="2.2"/></svg>
<svg class="ic" style="left:51px;top:348px" width="16" height="16" viewBox="0 0 16 16"><path d="M4,1 V11 L8,15 L12,11 V1" fill="none" stroke="#111" stroke-width="1.2"/></svg>
<div class="t" style="left:70px;top:349px;font-size:12px;color:#000;font-weight:normal;">简单孔 (5)</div>
<div class="t" style="left:201px;top:349px;font-size:12px;color:#000;font-weight:normal;">1</div>
<div class="a" style="left:26px;top:376px;width:9px;height:1px;background-image:linear-gradient(90deg,#8a8a8a 50%,transparent 50%);background-size:2px 1px"></div>
<svg class="ic" style="left:37px;top:371px" width="12" height="12" viewBox="0 0 12 12"><rect x="0.5" y="0.5" width="11" height="11" fill="#fff" stroke="#111" stroke-width="1"/><path d="M2.2,5.8 L4.8,9 L9.8,2.2" fill="none" stroke="#19b040" stroke-width="2.2"/></svg>
<svg class="ic" style="left:51px;top:368px" width="16" height="16" viewBox="0 0 16 16"><path d="M4,1 V11 L8,15 L12,11 V1" fill="none" stroke="#111" stroke-width="1.2"/></svg>
<div class="t" style="left:70px;top:369px;font-size:12px;color:#000;font-weight:normal;">简单孔 (6)</div>
<div class="t" style="left:201px;top:369px;font-size:12px;color:#000;font-weight:normal;">1</div>
<div class="a" style="left:26px;top:396px;width:9px;height:1px;background-image:linear-gradient(90deg,#8a8a8a 50%,transparent 50%);background-size:2px 1px"></div>
<svg class="ic" style="left:37px;top:391px" width="12" height="12" viewBox="0 0 12 12"><rect x="0.5" y="0.5" width="11" height="11" fill="#fff" stroke="#111" stroke-width="1"/><path d="M2.2,5.8 L4.8,9 L9.8,2.2" fill="none" stroke="#19b040" stroke-width="2.2"/></svg>
<svg class="ic" style="left:51px;top:388px" width="16" height="16" viewBox="0 0 16 16"><rect x="1" y="1" width="5" height="5" fill="none" stroke="#111" stroke-width="1.1"/><rect x="1" y="9" width="5" height="5" fill="none" stroke="#111" stroke-width="1.1"/><rect x="9" y="9" width="5" height="5" fill="none" stroke="#111" stroke-width="1.1"/><path d="M9,8 L14,2" stroke="#e8a020" stroke-width="2"/><path d="M14,2 L15,1" stroke="#d03020" stroke-width="1.5"/></svg>
<div class="t" style="left:70px;top:389px;font-size:12px;color:#000;font-weight:normal;">草图 (7) "SKETCH_0...</div>
<div class="t" style="left:201px;top:389px;font-size:12px;color:#000;font-weight:normal;">1</div>
<div class="a" style="left:26px;top:416px;width:9px;height:1px;background-image:linear-gradient(90deg,#8a8a8a 50%,transparent 50%);background-size:2px 1px"></div>
<svg class="ic" style="left:37px;top:411px" width="12" height="12" viewBox="0 0 12 12"><rect x="0.5" y="0.5" width="11" height="11" fill="#fff" stroke="#111" stroke-width="1"/><path d="M2.2,5.8 L4.8,9 L9.8,2.2" fill="none" stroke="#19b040" stroke-width="2.2"/></svg>
<svg class="ic" style="left:51px;top:408px" width="16" height="16" viewBox="0 0 16 16"><path d="M2,3 L13,2 L13,13 L2,14 Z" fill="#f7c070" stroke="#e07a30" stroke-width="1"/><path d="M5.5,3 V14 M9.5,2.5 V13.5" stroke="#e07a30" stroke-width="1"/><path d="M2,14 L13,13" stroke="#3a6ae0" stroke-width="1.4"/></svg>
<div class="t" style="left:70px;top:409px;font-size:12px;color:#000;font-weight:normal;">拉伸 (8)</div>
<div class="t" style="left:201px;top:409px;font-size:12px;color:#000;font-weight:normal;">1</div>
<div class="a" style="left:26px;top:436px;width:9px;height:1px;background-image:linear-gradient(90deg,#8a8a8a 50%,transparent 50%);background-size:2px 1px"></div>
<svg class="ic" style="left:37px;top:431px" width="12" height="12" viewBox="0 0 12 12"><rect x="0.5" y="0.5" width="11" height="11" fill="#fff" stroke="#111" stroke-width="1"/><path d="M2.2,5.8 L4.8,9 L9.8,2.2" fill="none" stroke="#19b040" stroke-width="2.2"/></svg>
<svg class="ic" style="left:51px;top:428px" width="16" height="16" viewBox="0 0 16 16"><path d="M6.2,1.4 L15.6,5.5 L15.6,16 L10.3,16.3 L0.6,12 L0.6,4.7 Z" fill="#d4e2fa"/><path d="M1,5.5 L6.2,2.5 L15,6.2 L10.3,10 Z" fill="#fbd070" stroke="#f04a20" stroke-width="1"/><path d="M2.5,5.6 L6.4,3.6 L12.5,6.3" fill="none" stroke="#fff4b0" stroke-width="1.1"/><path d="M0.6,12 V4.7 L6.2,1.4 M10.3,16.3 V8.5 L15.6,5.5 M0.6,4.7 L10.3,8.5" fill="none" stroke="#2030d0" stroke-width="1.2"/></svg>
<div class="t" style="left:70px;top:429px;font-size:12px;color:#000;font-weight:normal;">倒斜角 (9)</div>
<div class="t" style="left:201px;top:429px;font-size:12px;color:#000;font-weight:normal;">1</div>
<div class="a" style="left:26px;top:456px;width:9px;height:1px;background-image:linear-gradient(90deg,#8a8a8a 50%,transparent 50%);background-size:2px 1px"></div>
<svg class="ic" style="left:37px;top:451px" width="12" height="12" viewBox="0 0 12 12"><rect x="0.5" y="0.5" width="11" height="11" fill="#fff" stroke="#111" stroke-width="1"/><path d="M2.2,5.8 L4.8,9 L9.8,2.2" fill="none" stroke="#19b040" stroke-width="2.2"/></svg>
<svg class="ic" style="left:51px;top:448px" width="16" height="16" viewBox="0 0 16 16"><path d="M6.2,1.4 L15.6,5.5 L15.6,16 L10.3,16.3 L0.6,12 L0.6,4.7 Z" fill="#d4e2fa"/><path d="M1,5.5 L6.2,2.5 L15,6.2 L10.3,10 Z" fill="#fbd070" stroke="#f04a20" stroke-width="1"/><path d="M2.5,5.6 L6.4,3.6 L12.5,6.3" fill="none" stroke="#fff4b0" stroke-width="1.1"/><path d="M0.6,12 V4.7 L6.2,1.4 M10.3,16.3 V8.5 L15.6,5.5 M0.6,4.7 L10.3,8.5" fill="none" stroke="#2030d0" stroke-width="1.2"/></svg>
<div class="t" style="left:70px;top:449px;font-size:12px;color:#000;font-weight:normal;">倒斜角 (10)</div>
<div class="t" style="left:201px;top:449px;font-size:12px;color:#000;font-weight:normal;">1</div>
<div class="a" style="left:26px;top:476px;width:9px;height:1px;background-image:linear-gradient(90deg,#8a8a8a 50%,transparent 50%);background-size:2px 1px"></div>
<svg class="ic" style="left:37px;top:471px" width="12" height="12" viewBox="0 0 12 12"><rect x="0.5" y="0.5" width="11" height="11" fill="#fff" stroke="#111" stroke-width="1"/><path d="M2.2,5.8 L4.8,9 L9.8,2.2" fill="none" stroke="#19b040" stroke-width="2.2"/></svg>
<svg class="ic" style="left:51px;top:468px" width="16" height="16" viewBox="0 0 16 16"><path d="M1,6 L9,2.5 L15,5 L15,13 L8,16 L1,13 Z" fill="#4a6ae8" stroke="#2030c0" stroke-width="1"/><path d="M1,9 L8,12 L8,16 L1,13 Z" fill="#d8e6ff" stroke="#2030c0" stroke-width="0.8"/><path d="M1,6 L9,2.5 L15,5 L8,8 Z" fill="#f4f4ff" stroke="#2030c0" stroke-width="0.8"/><path d="M1,6 Q1,5.5 2,5.4 L8,8 L8,12 L1,9 Z" fill="#f8d060" stroke="#f04a20" stroke-width="1"/></svg>
<div class="t" style="left:70px;top:469px;font-size:12px;color:#000;font-weight:normal;">边倒圆 (11)</div>
<div class="t" style="left:201px;top:469px;font-size:12px;color:#000;font-weight:normal;">1</div>
<div class="a" style="left:26px;top:496px;width:9px;height:1px;background-image:linear-gradient(90deg,#8a8a8a 50%,transparent 50%);background-size:2px 1px"></div>
<svg class="ic" style="left:37px;top:491px" width="12" height="12" viewBox="0 0 12 12"><rect x="0.5" y="0.5" width="11" height="11" fill="#fff" stroke="#111" stroke-width="1"/><path d="M2.2,5.8 L4.8,9 L9.8,2.2" fill="none" stroke="#19b040" stroke-width="2.2"/></svg>
<svg class="ic" style="left:51px;top:488px" width="16" height="16" viewBox="0 0 16 16"><rect x="1" y="1" width="5" height="5" fill="none" stroke="#111" stroke-width="1.1"/><rect x="1" y="9" width="5" height="5" fill="none" stroke="#111" stroke-width="1.1"/><rect x="9" y="9" width="5" height="5" fill="none" stroke="#111" stroke-width="1.1"/><path d="M9,8 L14,2" stroke="#e8a020" stroke-width="2"/><path d="M14,2 L15,1" stroke="#d03020" stroke-width="1.5"/></svg>
<div class="t" style="left:70px;top:489px;font-size:12px;color:#000;font-weight:normal;">草图 (12) "SKETCH_...</div>
<div class="t" style="left:201px;top:489px;font-size:12px;color:#000;font-weight:normal;">1</div>
<div class="a" style="left:26px;top:516px;width:9px;height:1px;background-image:linear-gradient(90deg,#8a8a8a 50%,transparent 50%);background-size:2px 1px"></div>
<svg class="ic" style="left:37px;top:511px" width="12" height="12" viewBox="0 0 12 12"><rect x="0.5" y="0.5" width="11" height="11" fill="#fff" stroke="#111" stroke-width="1"/><path d="M2.2,5.8 L4.8,9 L9.8,2.2" fill="none" stroke="#19b040" stroke-width="2.2"/></svg>
<svg class="ic" style="left:51px;top:508px" width="16" height="16" viewBox="0 0 16 16"><path d="M2,3 L13,2 L13,13 L2,14 Z" fill="#f7c070" stroke="#e07a30" stroke-width="1"/><path d="M5.5,3 V14 M9.5,2.5 V13.5" stroke="#e07a30" stroke-width="1"/><path d="M2,14 L13,13" stroke="#3a6ae0" stroke-width="1.4"/></svg>
<div class="t" style="left:70px;top:509px;font-size:12px;color:#000;font-weight:bold;">拉伸 (13)</div>
<div class="t" style="left:201px;top:509px;font-size:12px;color:#000;font-weight:bold;">1</div>
<div class="a" style="left:0;top:672px;width:226px;height:17px;background:#f0f0f0"></div>
<div class="a" style="left:14px;top:673px;width:88px;height:15px;background:#c9c9c9"></div>
<svg class="ic" style="left:2px;top:675px" width="8" height="11" viewBox="0 0 8 11"><path d="M6,1.5 L2,5.5 L6,9.5" fill="none" stroke="#555" stroke-width="1.6"/></svg>
<svg class="ic" style="left:213px;top:675px" width="8" height="11" viewBox="0 0 8 11"><path d="M2,1.5 L6,5.5 L2,9.5" fill="none" stroke="#555" stroke-width="1.6"/></svg>
<div class="a" style="left:0;top:691px;width:227px;height:5px;background:#c9c9c9;border-top:1px solid #a0a0a0;border-bottom:1px solid #a0a0a0"></div>
<div class="t" style="left:2px;top:702px;font-size:14px;color:#2f86c4;font-weight:normal;">相依性</div>
<div class="a" style="left:0;top:718px;width:227px;height:2px;background:#cfcfcf"></div>
<svg class="ic" style="left:209px;top:703px" width="13" height="10" viewBox="0 0 13 10"><path d="M1.5,1.5 L6.5,8.5 L11.5,1.5" fill="none" stroke="#2f86c4" stroke-width="2"/></svg>
<div class="t" style="left:2px;top:726px;font-size:14px;color:#2f86c4;font-weight:normal;">细节</div>
<div class="a" style="left:0;top:742px;width:227px;height:2px;background:#cfcfcf"></div>
<svg class="ic" style="left:209px;top:727px" width="13" height="10" viewBox="0 0 13 10"><path d="M1.5,1.5 L6.5,8.5 L11.5,1.5" fill="none" stroke="#2f86c4" stroke-width="2"/></svg>
<div class="t" style="left:2px;top:750px;font-size:14px;color:#2f86c4;font-weight:normal;">预览</div>
<div class="a" style="left:0;top:766px;width:227px;height:2px;background:#cfcfcf"></div>
<svg class="ic" style="left:209px;top:751px" width="13" height="10" viewBox="0 0 13 10"><path d="M1.5,1.5 L6.5,8.5 L11.5,1.5" fill="none" stroke="#2f86c4" stroke-width="2"/></svg>
<div class="t" style="left:-1px;top:-9px;font-size:12px">日动</div>
<svg class="ic" style="left:35px;top:-4px" width="24" height="24" viewBox="0 0 24 24"><rect x="4" y="-6" width="16" height="19" fill="#e4e6f7" stroke="#8890d8" stroke-width="1.4"/></svg>
<svg class="ic" style="left:64px;top:-4px" width="24" height="24" viewBox="0 0 24 24"><path d="M1,12 L5,-4 L23,-4 L19,12 Z" fill="#f2e07a" stroke="#c8a830" stroke-width="1"/></svg>
<svg class="ic" style="left:96px;top:-4px" width="24" height="24" viewBox="0 0 24 24"><rect x="3" y="-4" width="18" height="16" fill="#4a5a80" stroke="#2a3050" stroke-width="1"/><rect x="8" y="4" width="8" height="8" fill="#dfe4f0"/></svg>
<div class="a" style="left:127px;top:0px;width:1px;height:13px;background:#d0d0d0"></div>
<svg class="ic" style="left:130px;top:-4px" width="24" height="24" viewBox="0 0 24 24"><circle cx="10" cy="8" r="3.5" fill="none" stroke="#bbb" stroke-width="1.5"/><path d="M12,5 L20,-4" stroke="#bbb" stroke-width="1.5"/></svg>
<svg class="ic" style="left:164px;top:-4px" width="24" height="24" viewBox="0 0 24 24"><rect x="3" y="-4" width="12" height="12" fill="#f4f4f4" stroke="#bbb"/><rect x="9" y="0" width="12" height="13" fill="#fafafa" stroke="#bbb"/><path d="M12,4 H18 M12,7 H18 M12,10 H18" stroke="#ccc"/></svg>
<svg class="ic" style="left:196px;top:-4px" width="24" height="24" viewBox="0 0 24 24"><rect x="4" y="-4" width="14" height="14" fill="#f4f4f4" stroke="#bbb"/><rect x="9" y="2" width="12" height="11" fill="#fafafa" stroke="#bbb"/><path d="M12,6 H18 M12,9 H18" stroke="#ccc"/></svg>
<div class="a" style="left:226px;top:0px;width:1px;height:13px;background:#d0d0d0"></div>
<svg class="ic" style="left:230px;top:-4px" width="24" height="24" viewBox="0 0 24 24"><path d="M3,6 Q10,10 15,2 Q17,-2 16,-6" fill="none" stroke="#3050d0" stroke-width="2.2"/><path d="M3,6 L9,2 L8,8 Z" fill="#3050d0"/></svg>
<svg class="ic" style="left:273px;top:-4px" width="24" height="24" viewBox="0 0 24 24"><path d="M8,12 Q2,4 8,-4" fill="none" stroke="#c8c8c8" stroke-width="1.8"/><path d="M12,4 H22" stroke="#c8c8c8" stroke-width="2"/></svg>
<svg class="ic" style="left:313px;top:-4px" width="24" height="24" viewBox="0 0 24 24"><path d="M12.0,-6 L20,-2.0 L12.0,2.0 L4,-2.0 Z" fill="#f2c050" stroke="#8a90c8" stroke-width="1"/><path d="M4,-2.0 L12.0,2.0 L12.0,10 L4,6.0 Z" fill="#dfe3f5" stroke="#8a90c8" stroke-width="1"/><path d="M12.0,2.0 L20,-2.0 L20,6.0 L12.0,10 Z" fill="#c5cdf0" stroke="#8a90c8" stroke-width="1"/><rect x="6" y="-4" width="14" height="14" fill="none" stroke="#5a6ad8" stroke-width="1"/></svg>
<div class="a" style="left:354px;top:0px;width:1px;height:13px;background:#d0d0d0"></div>
<svg class="ic" style="left:364px;top:-4px" width="24" height="24" viewBox="0 0 24 24"><path d="M12,-4 L19,4 L12,12 L5,4 Z" fill="#c8d4ff" stroke="#3848b8" stroke-width="1.4"/><path d="M12,-2 L12,10 L7,4 Z" fill="#3848b8"/></svg>
<div class="a" style="left:392px;top:0px;width:1px;height:13px;background:#d0d0d0"></div>
<div class="a" style="left:399px;top:-4px;width:125px;height:13px;border:1px solid #a8a8a8;border-top:none;background:#fff"></div>
<div class="t" style="left:401px;top:-8px;font-size:12px">查找命令</div>
<svg class="ic" style="left:497px;top:-5px" width="24" height="24" viewBox="0 0 24 24"><circle cx="15" cy="4" r="4" fill="none" stroke="#333" stroke-width="1.4"/><path d="M12,7 L6,13 L4,11 L10,5" fill="none" stroke="#333" stroke-width="1.3"/></svg>
<div class="dd" style="left:530px;top:3px"></div>
<div class="a" style="left:542px;top:0px;width:1px;height:14px;background:#d0d0d0"></div>
<div class="grip" style="left:546px;top:0px;height:12px"></div>
<svg class="ic" style="left:554px;top:-1px" width="24" height="24" viewBox="0 0 24 24"><rect x="3" y="-4" width="18" height="14" fill="#eef0ff" stroke="#5060e0" stroke-width="1.3"/><path d="M8,5 L11,2 M16,5 L13,2" stroke="#e04040" stroke-width="1.3"/></svg>
<svg class="ic" style="left:596px;top:-1px" width="24" height="24" viewBox="0 0 24 24"><path d="M2,6 L12,0 L22,6 L12,12 Z" fill="#d0d0d0" stroke="#444" stroke-width="1"/><circle cx="12" cy="5" r="2" fill="#555"/></svg>
<svg class="ic" style="left:640px;top:-1px" width="24" height="24" viewBox="0 0 24 24"><path d="M12.5,-6 L21,-1.75 L12.5,2.5 L4,-1.75 Z" fill="#c8d0ff" stroke="#3848b0" stroke-width="1"/><path d="M4,-1.75 L12.5,2.5 L12.5,11 L4,6.75 Z" fill="#6a80e8" stroke="#3848b0" stroke-width="1"/><path d="M12.5,2.5 L21,-1.75 L21,6.75 L12.5,11 Z" fill="#3a50c8" stroke="#3848b0" stroke-width="1"/></svg>
<svg class="ic" style="left:682px;top:-1px" width="24" height="24" viewBox="0 0 24 24"><path d="M4,2 L14,-4 L20,0 L20,10 L10,12 L4,10 Z" fill="#e8e2d6" stroke="#b0a898" stroke-width="1"/><path d="M14,-4 L18,4 L20,0" fill="#f0a040"/></svg>
<svg class="ic" style="left:714px;top:-1px" width="24" height="24" viewBox="0 0 24 24"><path d="M4,-4 L18,-4 L20,6 L12,12 L4,8 Z" fill="#b8ccf0" stroke="#7a8ab8" stroke-width="1"/><path d="M14,-2 L20,4" stroke="#30c060" stroke-width="3"/></svg>
<svg class="ic" style="left:757px;top:-1px" width="24" height="24" viewBox="0 0 24 24"><rect x="3" y="-6" width="18" height="16" fill="#cfcfcf" stroke="#444" stroke-width="1"/></svg>
<div class="a" style="left:800px;top:0px;width:1px;height:13px;background:#d0d0d0"></div>
<svg class="ic" style="left:804px;top:-1px" width="24" height="24" viewBox="0 0 24 24"><path d="M5,12 L5,-2 L14,-6 L14,8 Z" fill="#dfe6ff" stroke="#3848b8" stroke-width="1.2"/><path d="M14,-6 L20,-8 L20,6 L14,8" fill="#3848b8"/></svg>
<svg class="ic" style="left:836px;top:-1px" width="24" height="24" viewBox="0 0 24 24"><path d="M9,12 L9,-2 L17,-6 L17,8 Z" fill="#dfe6ff" stroke="#3848b8" stroke-width="1.2"/><path d="M3,0 L9,6 L5,10 Z" fill="#e03030"/><path d="M17,-6 L22,-8 L22,6 L17,8" fill="#3848b8"/></svg>
<div class="dd" style="left:867px;top:3px"></div>
<div class="a" style="left:878px;top:0px;width:1px;height:14px;background:#d0d0d0"></div>
<div class="grip" style="left:890px;top:0px;height:12px"></div>
<svg class="ic" style="left:899px;top:-1px" width="24" height="24" viewBox="0 0 24 24"><rect x="6" y="-4" width="16" height="14" fill="#eef0fa" stroke="#6070c0" stroke-width="1"/><path d="M9,1 H11 M13,1 H20 M9,6 H11 M13,6 H20" stroke="#4050b0" stroke-width="1.2"/><path d="M1,2 L8,4 L3,9" fill="none" stroke="#999"/></svg>
<svg class="ic" style="left:923px;top:-1px" width="24" height="24" viewBox="0 0 24 24"><path d="M6,8 L6,-4 M6,8 L16,12 M6,8 L16,2" fill="none" stroke="#888" stroke-width="1"/><path d="M16,2 L18,0" stroke="#e04040" stroke-width="1.5"/></svg>
<div class="a" style="left:971px;top:0px;width:1px;height:13px;background:#d0d0d0"></div>
<svg class="ic" style="left:974px;top:-1px" width="24" height="24" viewBox="0 0 24 24"><path d="M12,-4 L19,4 L12,12 L5,4 Z" fill="#c8d4ff" stroke="#3848b8" stroke-width="1.4"/><path d="M12,-2 L12,10 L7,4 Z" fill="#3848b8"/></svg>
<svg class="ic" style="left:1007px;top:-1px" width="24" height="24" viewBox="0 0 24 24"><path d="M6,12 L12,4 L10,0 L16,-4 L20,2" fill="none" stroke="#e8b830" stroke-width="3"/><path d="M14,-2 L22,-4" stroke="#3848b8" stroke-width="3"/></svg>
<div class="a" style="left:1039px;top:0px;width:1px;height:13px;background:#d0d0d0"></div>
<svg class="ic" style="left:1045px;top:-1px" width="24" height="24" viewBox="0 0 24 24"><path d="M4,8 L10,2 L10,12 Z" fill="#e03030"/><path d="M10,4 L18,-4 L22,2 L14,10 Z" fill="#5a70e0" stroke="#2a40b0"/></svg>
<div class="a" style="left:1088px;top:0px;width:1px;height:13px;background:#d0d0d0"></div>
<svg class="ic" style="left:1089px;top:-1px" width="24" height="24" viewBox="0 0 24 24"><path d="M2,0 L20,8 M8,-4 L8,12 M14,-2 L14,10" stroke="#e04040" stroke-width="1.1"/><circle cx="11" cy="5" r="2.2" fill="#2040c0"/></svg>
<svg class="ic" style="left:1137px;top:-1px" width="24" height="24" viewBox="0 0 24 24"><rect x="2" y="3" width="20" height="7" fill="#f0d070" stroke="#b09030" stroke-width="1"/><path d="M5,3 V6 M8,3 V5 M11,3 V6 M14,3 V5 M17,3 V6" stroke="#555" stroke-width="0.8"/><path d="M2,0 H22" stroke="#e04040" stroke-width="1"/></svg>
<div class="dd" style="left:1167px;top:3px"></div>
<div class="a" style="left:1179px;top:0px;width:1px;height:14px;background:#d0d0d0"></div>
<div class="dd" style="left:-2px;top:30px"></div>
<svg class="ic" style="left:10px;top:20px" width="24" height="24" viewBox="0 0 24 24"><path d="M3,5 L18,3 L18,20 L3,22 Z" fill="#f6c880" stroke="#e8804a" stroke-width="1"/><path d="M3,5 L8,2 L20,1 L18,3" fill="#f8e0a0" stroke="#e8804a" stroke-width="0.8"/><path d="M7.5,4.5 V21.5 M13,3.8 V20.8" stroke="#e8804a" stroke-width="1"/><path d="M3,22 Q10,24 18,20" fill="none" stroke="#4a7ae8" stroke-width="2"/><path d="M22,19 V9 M20,11 L22,8 L24,11" stroke="#e03030" stroke-width="1.3" fill="none"/></svg>
<div class="a" style="left:39px;top:18px;width:31px;height:30px;background:#fdf5dc;border:1px solid #f6c75a"></div>
<svg class="ic" style="left:42px;top:20px" width="24" height="24" viewBox="0 0 24 24"><path d="M4,8 Q4,3 12,2 L12,23 L8,20 L8,15 Q4,13 4,8 Z" fill="#3a6ae8" stroke="#1a3ab8" stroke-width="1"/><path d="M12,2 Q20,3 20,8 Q20,13 16,15 L16,20 L12,23 Z" fill="#f8b020" stroke="#e85010" stroke-width="1"/><path d="M4,8 Q12,4 20,8" fill="none" stroke="#e85010" stroke-width="1.2"/><path d="M12,0 V24" stroke="#111" stroke-width="1" stroke-dasharray="2 1.2"/></svg>
<svg class="ic" style="left:74px;top:20px" width="24" height="24" viewBox="0 0 24 24"><path d="M2,6 L12,2 L22,5 L22,18 L12,22 L2,18 Z" fill="#b8c4f4" stroke="#5a6ad8" stroke-width="1"/><path d="M2,6 L12,9 L22,5 M12,9 V22" fill="none" stroke="#5a6ad8" stroke-width="1"/><path d="M2,6 L12,9 L12,22 L2,18 Z" fill="#8a9cf0"/><circle cx="7" cy="13" r="3.2" fill="#f59a30" stroke="#e05a20" stroke-width="0.8"/></svg>
<svg class="ic" style="left:104px;top:20px" width="24" height="24" viewBox="0 0 24 24"><path d="M-0.5,12 L7.2,2 L23.2,10.3 L23.2,13.6 L11.5,23 Z" fill="#dfe8fa" stroke="#6a8ae0" stroke-width="1"/><ellipse cx="10.6" cy="12" rx="6.8" ry="4.3" fill="#f8b030" stroke="#e07010" stroke-width="0.8"/><ellipse cx="11.5" cy="10.3" rx="3.5" ry="1.8" fill="#fce090"/></svg>
<svg class="ic" style="left:136px;top:20px" width="24" height="24" viewBox="0 0 24 24"><path d="M1,15 Q4,6 12,2 Q20,4 23,14 L16,20 Q13,14 8,14 Z" fill="#e4eaf2" stroke="#888" stroke-width="1"/><path d="M1,15 L8,14 L9,21 Q5,18 1,15 Z" fill="#c8ccd4" stroke="#888" stroke-width="0.8"/><path d="M10,15 L15,6 L18,8 L13,17 Z" fill="#f2c040" stroke="#a08020" stroke-width="0.8"/><circle cx="11" cy="16" r="1.6" fill="#e03030"/></svg>
<svg class="ic" style="left:167px;top:20px" width="24" height="24" viewBox="0 0 24 24"><path d="M1,11 L12,4 L23,11 L12,20 Z" fill="#c8d0f8" stroke="#4a5ad8" stroke-width="1.2"/><path d="M1,11 V14 L12,22 L23,14 V11" fill="#8a9ef0" stroke="#4a5ad8" stroke-width="1"/><path d="M5,11 L12,16 L19,11 L19,8 L12,13 L5,8 Z" fill="#f89a30" stroke="#e05a20" stroke-width="0.8"/></svg>
<div class="a" style="left:196px;top:19px;width:1px;height:27px;background:#d0d0d0"></div>
<svg class="ic" style="left:203px;top:20px" width="24" height="24" viewBox="0 0 24 24"><path d="M4,5 L20,3 L22,7 L6,9 Z" fill="#f8e890" stroke="#e0a040" stroke-width="1"/><path d="M2,16 L12,13 L22,16 L12,20 Z" fill="#d8e0ff" stroke="#5a6ad8"/><path d="M2,16 V19 L12,23 L22,19 V16 L12,20 Z" fill="#8a9ef0" stroke="#5a6ad8" stroke-width="0.8"/><path d="M12,16 V9 M9,12 L12,8 L15,12" fill="none" stroke="#f07020" stroke-width="2"/></svg>
<svg class="ic" style="left:234px;top:20px" width="24" height="24" viewBox="0 0 24 24"><path d="M1,14 L13,8 L23,13 L11,19 Z" fill="#c8d4f8" stroke="#5a6ad8" stroke-width="1"/><path d="M1,14 V16 L11,21 L23,15 V13 L11,19 Z" fill="#6a80e0"/><path d="M11.5,3 L14,4.25 L11.5,5.5 L9,4.25 Z" fill="#fce8b0" stroke="#d07020" stroke-width="1"/><path d="M9,4.25 L11.5,5.5 L11.5,8 L9,6.75 Z" fill="#f8b850" stroke="#d07020" stroke-width="1"/><path d="M11.5,5.5 L14,4.25 L14,6.75 L11.5,8 Z" fill="#f09830" stroke="#d07020" stroke-width="1"/><path d="M6.5,7 L9,8.25 L6.5,9.5 L4,8.25 Z" fill="#fce8b0" stroke="#d07020" stroke-width="1"/><path d="M4,8.25 L6.5,9.5 L6.5,12 L4,10.75 Z" fill="#f8b850" stroke="#d07020" stroke-width="1"/><path d="M6.5,9.5 L9,8.25 L9,10.75 L6.5,12 Z" fill="#f09830" stroke="#d07020" stroke-width="1"/><path d="M15.5,6 L18,7.25 L15.5,8.5 L13,7.25 Z" fill="#fce8b0" stroke="#d07020" stroke-width="1"/><path d="M13,7.25 L15.5,8.5 L15.5,11 L13,9.75 Z" fill="#f8b850" stroke="#d07020" stroke-width="1"/><path d="M15.5,8.5 L18,7.25 L18,9.75 L15.5,11 Z" fill="#f09830" stroke="#d07020" stroke-width="1"/><path d="M10.5,10 L13,11.25 L10.5,12.5 L8,11.25 Z" fill="#fce8b0" stroke="#d07020" stroke-width="1"/><path d="M8,11.25 L10.5,12.5 L10.5,15 L8,13.75 Z" fill="#f8b850" stroke="#d07020" stroke-width="1"/><path d="M10.5,12.5 L13,11.25 L13,13.75 L10.5,15 Z" fill="#f09830" stroke="#d07020" stroke-width="1"/><path d="M19.5,9 L22,10.25 L19.5,11.5 L17,10.25 Z" fill="#fce8b0" stroke="#d07020" stroke-width="1"/><path d="M17,10.25 L19.5,11.5 L19.5,14 L17,12.75 Z" fill="#f8b850" stroke="#d07020" stroke-width="1"/><path d="M19.5,11.5 L22,10.25 L22,12.75 L19.5,14 Z" fill="#f09830" stroke="#d07020" stroke-width="1"/><path d="M14.5,13 L17,14.25 L14.5,15.5 L12,14.25 Z" fill="#fce8b0" stroke="#d07020" stroke-width="1"/><path d="M12,14.25 L14.5,15.5 L14.5,18 L12,16.75 Z" fill="#f8b850" stroke="#d07020" stroke-width="1"/><path d="M14.5,15.5 L17,14.25 L17,16.75 L14.5,18 Z" fill="#f09830" stroke="#d07020" stroke-width="1"/></svg>
<svg class="ic" style="left:264px;top:20px" width="24" height="24" viewBox="0 0 24 24"><path d="M4.25,2 L7.5,3.625 L4.25,5.25 L1,3.625 Z" fill="#fff2c8" stroke="#f08030" stroke-width="1"/><path d="M1,3.625 L4.25,5.25 L4.25,8.5 L1,6.875 Z" fill="#fcd070" stroke="#f08030" stroke-width="1"/><path d="M4.25,5.25 L7.5,3.625 L7.5,6.875 L4.25,8.5 Z" fill="#f8b040" stroke="#f08030" stroke-width="1"/><path d="M12.25,4 L15.5,5.625 L12.25,7.25 L9,5.625 Z" fill="#fff2c8" stroke="#f08030" stroke-width="1"/><path d="M9,5.625 L12.25,7.25 L12.25,10.5 L9,8.875 Z" fill="#fcd070" stroke="#f08030" stroke-width="1"/><path d="M12.25,7.25 L15.5,5.625 L15.5,8.875 L12.25,10.5 Z" fill="#f8b040" stroke="#f08030" stroke-width="1"/><path d="M20.25,6 L23.5,7.625 L20.25,9.25 L17,7.625 Z" fill="#fff2c8" stroke="#f08030" stroke-width="1"/><path d="M17,7.625 L20.25,9.25 L20.25,12.5 L17,10.875 Z" fill="#fcd070" stroke="#f08030" stroke-width="1"/><path d="M20.25,9.25 L23.5,7.625 L23.5,10.875 L20.25,12.5 Z" fill="#f8b040" stroke="#f08030" stroke-width="1"/><path d="M5.25,10 L8.5,11.625 L5.25,13.25 L2,11.625 Z" fill="#fff2c8" stroke="#f08030" stroke-width="1"/><path d="M2,11.625 L5.25,13.25 L5.25,16.5 L2,14.875 Z" fill="#fcd070" stroke="#f08030" stroke-width="1"/><path d="M5.25,13.25 L8.5,11.625 L8.5,14.875 L5.25,16.5 Z" fill="#f8b040" stroke="#f08030" stroke-width="1"/><path d="M13.25,12 L16.5,13.625 L13.25,15.25 L10,13.625 Z" fill="#fff2c8" stroke="#f08030" stroke-width="1"/><path d="M10,13.625 L13.25,15.25 L13.25,18.5 L10,16.875 Z" fill="#fcd070" stroke="#f08030" stroke-width="1"/><path d="M13.25,15.25 L16.5,13.625 L16.5,16.875 L13.25,18.5 Z" fill="#f8b040" stroke="#f08030" stroke-width="1"/><path d="M20.25,13 L23.5,14.625 L20.25,16.25 L17,14.625 Z" fill="#fff2c8" stroke="#f08030" stroke-width="1"/><path d="M17,14.625 L20.25,16.25 L20.25,19.5 L17,17.875 Z" fill="#fcd070" stroke="#f08030" stroke-width="1"/><path d="M20.25,16.25 L23.5,14.625 L23.5,17.875 L20.25,19.5 Z" fill="#f8b040" stroke="#f08030" stroke-width="1"/><path d="M12.25,18 L15.5,19.625 L12.25,21.25 L9,19.625 Z" fill="#fff2c8" stroke="#f08030" stroke-width="1"/><path d="M9,19.625 L12.25,21.25 L12.25,24.5 L9,22.875 Z" fill="#fcd070" stroke="#f08030" stroke-width="1"/><path d="M12.25,21.25 L15.5,19.625 L15.5,22.875 L12.25,24.5 Z" fill="#f8b040" stroke="#f08030" stroke-width="1"/></svg>
<svg class="ic" style="left:298px;top:20px" width="24" height="24" viewBox="0 0 24 24"><path d="M7,8 L16,2 L16,18 L7,24 Z" fill="#f8c860" stroke="#f07030" stroke-width="1"/><path d="M1,11 L8,8 L15,10 L8,13 Z" fill="#fce8a0" stroke="#f07030" stroke-width="0.7"/><path d="M1,11 V16 L8,18 V13 Z" fill="#f8d070" stroke="#f07030" stroke-width="0.7"/><path d="M15.5,9 L22,12.25 L15.5,15.5 L9,12.25 Z" fill="#e8f0ff" stroke="#6a80e0" stroke-width="1"/><path d="M9,12.25 L15.5,15.5 L15.5,22 L9,18.75 Z" fill="#c0d0f8" stroke="#6a80e0" stroke-width="1"/><path d="M15.5,15.5 L22,12.25 L22,18.75 L15.5,22 Z" fill="#5a80e8" stroke="#6a80e0" stroke-width="1"/></svg>
<svg class="ic" style="left:327px;top:20px" width="24" height="24" viewBox="0 0 24 24"><rect x="3" y="10" width="12" height="12" fill="#2aa090" stroke="#111" stroke-width="1.2"/><circle cx="15" cy="9" r="6.5" fill="#4ab0a0" stroke="#111" stroke-width="1.2"/><path d="M6,1 V7 M3,4 H9" stroke="#e03030" stroke-width="1.5"/></svg>
<div class="dd" style="left:357px;top:30px"></div>
<svg class="ic" style="left:370px;top:20px" width="24" height="24" viewBox="0 0 24 24"><path d="M2,9 L6,5 L14,5 L14,20 L2,20 Z" fill="#d8e0ff" stroke="#5a6ad8" stroke-width="1"/><path d="M2,9 L10,9 L10,20" fill="none" stroke="#5a6ad8" stroke-width="0.8"/><path d="M10,9 L14,5 L23,5 L23,16 L19,20 L10,20 Z" fill="#f8d8a0" stroke="#e03030" stroke-width="1" stroke-dasharray="1.5 1"/><path d="M10,9 L19,9 L23,5 M19,9 V20" fill="none" stroke="#e03030" stroke-width="0.8" stroke-dasharray="1.5 1"/></svg>
<svg class="ic" style="left:401px;top:20px" width="24" height="24" viewBox="0 0 24 24"><path d="M4,20 Q10,14 8,4 L20,2 Q16,12 20,20 Q10,22 4,20 Z" fill="#c0ccf8" stroke="#5a6ad8" stroke-width="1"/><path d="M8,2 L18,12 M10,1 L20,10" stroke="#e03030" stroke-width="1.3"/></svg>
<svg class="ic" style="left:432px;top:20px" width="24" height="24" viewBox="0 0 24 24"><path d="M2,11 L14,6 L22,10 L10,15 Z" fill="#d8e0ff" stroke="#5a6ad8" stroke-width="1"/><path d="M2,11 V15 L10,19 L22,14 V10 L10,15 Z" fill="#9aaef0" stroke="#5a6ad8" stroke-width="0.8"/><path d="M3,16 L21,7" stroke="#e03030" stroke-width="1.3"/></svg>
<svg class="ic" style="left:464px;top:20px" width="24" height="24" viewBox="0 0 24 24"><path d="M3,6 L14,3 L14,20 L3,22 Z" fill="#f8c070" stroke="#e07030" stroke-width="1"/><path d="M6,9 L12,8 L12,17 L6,18 Z" fill="#fff"/><path d="M14,3 L20,5 L20,22 L14,20 Z" fill="#5a80e8" stroke="#3a50c0" stroke-width="1"/></svg>
<svg class="ic" style="left:494px;top:20px" width="24" height="24" viewBox="0 0 24 24"><path d="M3,3 Q8,1 11,1 L11,12 Q7,13 3,14 Z" fill="#c8d4ff" stroke="#5a6ad8" stroke-width="1"/><path d="M10,9 Q16,9 21,6 L21,21 Q16,23 10,23 Z" fill="#f8d070" stroke="#e07030" stroke-width="1"/><path d="M2,15 L7,20 M4,20 H8 V16" stroke="#f07020" stroke-width="1.8" fill="none"/></svg>
<div class="a" style="left:525px;top:19px;width:1px;height:27px;background:#d0d0d0"></div>
<svg class="ic" style="left:531px;top:20px" width="24" height="24" viewBox="0 0 24 24"><path d="M1.1,6.3 L14.5,9.6 L14.5,23 L1.1,19.6 Z" fill="#dce6fa" stroke="#3a5ad0" stroke-width="1"/><path d="M14.5,9.6 L23.2,4.9 L23.2,18.9 L14.5,23 Z" fill="#6a88f0" stroke="#3a5ad0" stroke-width="1"/><path d="M1.1,6.3 L10.5,1.5 L23.2,4.9 L14.5,9.6 Z" fill="#f2f4ff" stroke="#3a5ad0" stroke-width="1"/><path d="M1.1,6.3 Q2,3.5 6,3 L18,6.5 Q15,8 14.5,13 L1.1,11.5 Z" fill="#f8e090" stroke="#f05a30" stroke-width="1.1"/></svg>
<svg class="ic" style="left:562px;top:20px" width="24" height="24" viewBox="0 0 24 24"><path d="M11.7,3.2 L18.4,7.2 L18.4,23.3 L11.7,19.3 Z" fill="#dce6fa" stroke="#5a7ae0" stroke-width="1"/><path d="M0,20 L7,19.5 L18.4,23.3 L10,24 Z" fill="#dce6fa" stroke="#5a7ae0" stroke-width="1"/><path d="M7,19.5 Q12,18 11.7,8 L17,11 Q18,21 10,23.5 Z" fill="#fbe0a0" stroke="#f07040" stroke-width="1"/></svg>
<svg class="ic" style="left:593px;top:20px" width="24" height="24" viewBox="0 0 24 24"><rect x="0.5" y="1" width="23" height="23" fill="#c8e8f4"/><path d="M0.5,6 L8,2 L23.5,8 L16,12 Z" fill="#fce890" stroke="#f06a30" stroke-width="1"/><path d="M0.5,6 V9.5 L16,15.5 L23.5,11.5 V8 L16,12 Z" fill="#f8a860" stroke="#f06a30" stroke-width="0.8"/><path d="M0.5,9.5 V24 M16,15.5 V24" stroke="#7a8ad8" stroke-width="0.9"/><rect x="0.5" y="15" width="15.5" height="9" fill="#e0e8f8" opacity="0.6"/></svg>
<svg class="ic" style="left:649px;top:19px" width="11" height="8" viewBox="0 0 11 8"><path d="M1,1 L4,4 L1,7 M5.5,1 L8.5,4 L5.5,7" fill="none" stroke="#111" stroke-width="1.6"/></svg>
<div class="dd" style="left:650px;top:37px"></div>
<div class="a" style="left:662px;top:18px;width:1px;height:29px;background:#d0d0d0"></div>
<div class="grip" style="left:666px;top:19px;height:26px"></div>
<svg class="ic" style="left:675px;top:20px" width="24" height="24" viewBox="0 0 24 24"><path d="M2,7 L12,2 L22,7 L22,18 L12,23 L2,18 Z" fill="#f0c8f4" stroke="#b070c8" stroke-width="0.8"/><path d="M2,7 L12,2 L22,7 L12,12 Z" fill="#e8b0ee"/><path d="M2,7 L12,12 L12,23 L2,18 Z" fill="#f8c060" stroke="#e05030" stroke-width="0.9"/><path d="M12,12 L22,7 L22,18 L12,23 Z" fill="#e4c4f0"/><path d="M15,9 V23 M8,16 H22 M15,9 L13,11 M15,9 L17,11 M15,23 L13,21 M15,23 L17,21 M8,16 L10,14 M8,16 L10,18 M22,16 L20,14 M22,16 L20,18" stroke="#555" stroke-width="1.4" fill="none"/></svg>
<div class="dd" style="left:704px;top:30px"></div>
<svg class="ic" style="left:718px;top:20px" width="24" height="24" viewBox="0 0 24 24"><path d="M2,7 L12,2 L22,7 L22,18 L12,23 L2,18 Z" fill="#f0c8f4" stroke="#b070c8" stroke-width="0.8"/><path d="M2,7 L12,2 L22,7 L12,12 Z" fill="#e8b0ee"/><path d="M2,7 L12,12 L12,23 L2,18 Z" fill="#f8c060" stroke="#e05030" stroke-width="0.9"/><path d="M12,12 L22,7 L22,18 L12,23 Z" fill="#e4c4f0"/><path d="M11,23 L15,15 L19,23 Z" fill="#fff" stroke="#222" stroke-width="1.3"/></svg>
<div class="dd" style="left:747px;top:30px"></div>
<svg class="ic" style="left:760px;top:20px" width="24" height="24" viewBox="0 0 24 24"><path d="M2,7 L12,2 L22,7 L22,18 L12,23 L2,18 Z" fill="#f0c8f4" stroke="#b070c8" stroke-width="0.8"/><path d="M2,7 L12,2 L22,7 L12,12 Z" fill="#e8b0ee"/><path d="M2,7 L12,12 L12,23 L2,18 Z" fill="#f8c060" stroke="#e05030" stroke-width="0.9"/><path d="M12,12 L22,7 L22,18 L12,23 Z" fill="#e4c4f0"/><path d="M9,12 L21,23 M21,12 L9,23" stroke="#444" stroke-width="2"/></svg>
<svg class="ic" style="left:791px;top:20px" width="24" height="24" viewBox="0 0 24 24"><path d="M2,7 L12,2 L22,7 L22,18 L12,23 L2,18 Z" fill="#f0c8f4" stroke="#b070c8" stroke-width="0.8"/><path d="M2,7 L12,2 L22,7 L12,12 Z" fill="#e8b0ee"/><path d="M2,7 L12,12 L12,23 L2,18 Z" fill="#f8c060" stroke="#e05030" stroke-width="0.9"/><path d="M12,12 L22,7 L22,18 L12,23 Z" fill="#e4c4f0"/><rect x="11" y="10" width="7" height="9" fill="#e8ecff" stroke="#4050a0" stroke-width="0.8"/><rect x="14" y="13" width="7" height="9" fill="#e8ecff" stroke="#4050a0" stroke-width="0.8"/></svg>
<div class="dd" style="left:821px;top:30px"></div>
<svg class="ic" style="left:833px;top:20px" width="24" height="24" viewBox="0 0 24 24"><path d="M2,7 L12,2 L22,7 L22,18 L12,23 L2,18 Z" fill="#f0c8f4" stroke="#b070c8" stroke-width="0.8"/><path d="M2,7 L12,2 L22,7 L12,12 Z" fill="#e8b0ee"/><path d="M2,7 L12,12 L12,23 L2,18 Z" fill="#f8c060" stroke="#e05030" stroke-width="0.9"/><path d="M12,12 L22,7 L22,18 L12,23 Z" fill="#e4c4f0"/><rect x="14" y="7" width="6" height="6" fill="#fff" stroke="#444"/><rect x="14" y="15" width="6" height="6" fill="#fff" stroke="#444"/></svg>
<div class="dd" style="left:864px;top:30px"></div>
<svg class="ic" style="left:876px;top:20px" width="24" height="24" viewBox="0 0 24 24"><path d="M2,7 L12,2 L22,7 L22,18 L12,23 L2,18 Z" fill="#f0c8f4" stroke="#b070c8" stroke-width="0.8"/><path d="M2,7 L12,2 L22,7 L12,12 Z" fill="#e8b0ee"/><path d="M2,7 L12,12 L12,23 L2,18 Z" fill="#f8c060" stroke="#e05030" stroke-width="0.9"/><path d="M12,12 L22,7 L22,18 L12,23 Z" fill="#e4c4f0"/><path d="M14,8 L20,14 M20,8 L14,14 M10,20 H24 M10,17 V23 M24,17 V23" stroke="#222" stroke-width="1.1"/></svg>
<div class="dd" style="left:907px;top:30px"></div>
<svg class="ic" style="left:920px;top:20px" width="24" height="24" viewBox="0 0 24 24"><path d="M2,7 L12,2 L22,7 L22,18 L12,23 L2,18 Z" fill="#f0c8f4" stroke="#b070c8" stroke-width="0.8"/><path d="M2,7 L12,2 L22,7 L12,12 Z" fill="#e8b0ee"/><path d="M2,7 L12,12 L12,23 L2,18 Z" fill="#f8c060" stroke="#e05030" stroke-width="0.9"/><path d="M12,12 L22,7 L22,18 L12,23 Z" fill="#e4c4f0"/><rect x="11" y="12" width="9" height="9" fill="none" stroke="#222" stroke-width="1.2"/><rect x="14" y="15" width="8" height="8" fill="none" stroke="#222" stroke-width="1.2"/><circle cx="11" cy="23" r="1" fill="#2040c0"/><circle cx="22" cy="12" r="1" fill="#2040c0"/></svg>
<svg class="ic" style="left:952px;top:20px" width="24" height="24" viewBox="0 0 24 24"><path d="M2,7 L12,2 L22,7 L22,18 L12,23 L2,18 Z" fill="#f0c8f0" stroke="#b070c8" stroke-width="0.8"/><path d="M12,7 V23" stroke="#e08030" stroke-width="2"/><path d="M4,23 L9,14 L14,23 Z" fill="#fff" stroke="#222" stroke-width="1.3"/></svg>
<svg class="ic" style="left:983px;top:20px" width="24" height="24" viewBox="0 0 24 24"><path d="M2,7 L12,2 L22,7 L22,18 L12,23 L2,18 Z" fill="#f0c8f0" stroke="#b070c8" stroke-width="0.8"/><path d="M2,7 L12,12 L22,7" fill="none" stroke="#e04040" stroke-width="1.2"/><path d="M15,9 V23 M8,16 H22 M15,9 L13,11 M15,9 L17,11 M15,23 L13,21 M15,23 L17,21 M8,16 L10,14 M8,16 L10,18 M22,16 L20,14 M22,16 L20,18" stroke="#555" stroke-width="1.4" fill="none"/></svg>
<div class="dd" style="left:1013px;top:30px"></div>
<div class="dd" style="left:1024px;top:37px"></div>
<div class="a" style="left:1036px;top:18px;width:1px;height:29px;background:#d0d0d0"></div>
<div class="grip" style="left:1040px;top:19px;height:26px"></div>
<svg class="ic" style="left:1047px;top:20px" width="24" height="24" viewBox="0 0 24 24"><path d="M1.5,5.5 Q12,4 22.5,4.5 Q18,12 19.5,22.5 Q10,18 3,14 Q1,10 1.5,5.5 Z" fill="#b4c4f4" stroke="#5a6ad8" stroke-width="1"/><path d="M8,5 Q6,12 9,17 M14,4.8 Q12,13 15,20" fill="none" stroke="#5a6ad8" stroke-width="0.9"/></svg>
<svg class="ic" style="left:1078px;top:20px" width="24" height="24" viewBox="0 0 24 24"><path d="M1.5,5.5 Q12,4 22.5,4.5 Q18,12 19.5,22.5 Q10,18 3,14 Q1,10 1.5,5.5 Z" fill="#b4c4f4" stroke="#5a6ad8" stroke-width="1"/><path d="M8,5 Q6,12 9,17 M14,4.8 Q12,13 15,20 M2,9.5 Q12,9 21,10 M2.5,13 Q12,14 20,16" fill="none" stroke="#5a6ad8" stroke-width="0.9"/></svg>
<svg class="ic" style="left:1109px;top:20px" width="24" height="24" viewBox="0 0 24 24"><path d="M1.5,5.5 Q12,4 22.5,4.5 Q18,12 19.5,22.5 Q10,18 3,14 Q1,10 1.5,5.5 Z" fill="#b4c4f4" stroke="#5a6ad8" stroke-width="1"/><path d="M8,5 Q6,12 9,17 M14,4.8 Q12,13 15,20" fill="none" stroke="#7a8ae0" stroke-width="0.7"/><path d="M6,14 Q5,7 11,7 Q17,7 16,13 L14,15 Q11,11 8,15 Z" fill="none" stroke="#333" stroke-width="1.4"/></svg>
<svg class="ic" style="left:1139px;top:20px" width="24" height="24" viewBox="0 0 24 24"><path d="M3,12 L14,3 L22,12 L10,22 Z" fill="#e0e0e0" stroke="#999" stroke-width="1"/><path d="M6,10 L17,19 M9,7 L20,16 M12,5 L22,13 M6,16 L17,6" stroke="#aaa" stroke-width="0.8"/><path d="M3,12 L10,22" stroke="#e05030" stroke-width="1.8"/><path d="M14,3 L22,12" stroke="#e05030" stroke-width="1.8"/><path d="M5,5 L8,2 M17,21 L20,18" stroke="#f08020" stroke-width="2"/></svg>
<svg class="ic" style="left:1169px;top:20px" width="24" height="24" viewBox="0 0 24 24"><circle cx="10" cy="8" r="5" fill="none" stroke="#333" stroke-width="1.2"/><path d="M10,8 L12,5" stroke="#3a8a3a" stroke-width="1"/><path d="M4,14 Q8,22 16,20" fill="none" stroke="#333" stroke-width="1.2"/><circle cx="4" cy="14" r="1.5" fill="#e03030"/><circle cx="16" cy="20" r="1.5" fill="#e03030"/><path d="M16,14 L24,10 L24,16 Z" fill="#c8d0ff" stroke="#4050c0"/></svg>
<svg class="ic" style="left:-2px;top:55px" width="24" height="24" viewBox="0 0 24 24"><path d="M1,19 L11,15 L21,19 L11,23 Z" fill="#dff2df" stroke="#4a5a4a" stroke-width="0.9"/><path d="M1,15 L11,11 L21,15 L11,19 Z" fill="#dff2df" stroke="#4a5a4a" stroke-width="0.9"/><path d="M1,11 L11,7 L21,11 L11,15 Z" fill="#dff2df" stroke="#4a5a4a" stroke-width="0.9"/><path d="M1,7 L11,3 L21,7 L11,11 Z" fill="#dff2df" stroke="#4a5a4a" stroke-width="0.9"/><path d="M3,21 L11,24 L21,20" fill="none" stroke="#bbb" stroke-width="1.2"/><rect x="9.5" y="1" width="3.2" height="3.2" fill="#7a60d0"/><rect x="0" y="9" width="3.2" height="3.2" fill="#7a60d0"/><rect x="19" y="9" width="3.2" height="3.2" fill="#7a60d0"/><rect x="9.5" y="9" width="3.2" height="3.2" fill="#7a60d0"/><rect x="0" y="13" width="3.2" height="3.2" fill="#7a60d0"/><rect x="19" y="13" width="3.2" height="3.2" fill="#7a60d0"/><rect x="9.5" y="17" width="3.2" height="3.2" fill="#7a60d0"/></svg>
<svg class="ic" style="left:31px;top:55px" width="24" height="24" viewBox="0 0 24 24"><path d="M1,19 L11,15 L21,19 L11,23 Z" fill="#dff2df" stroke="#4a5a4a" stroke-width="0.9"/><path d="M1,15 L11,11 L21,15 L11,19 Z" fill="#dff2df" stroke="#4a5a4a" stroke-width="0.9"/><path d="M1,11 L11,7 L21,11 L11,15 Z" fill="#dff2df" stroke="#4a5a4a" stroke-width="0.9"/><path d="M1,7 L11,3 L21,7 L11,11 Z" fill="#dff2df" stroke="#4a5a4a" stroke-width="0.9"/><path d="M3,21 L11,24 L21,20" fill="none" stroke="#bbb" stroke-width="1.2"/><rect x="10" y="9" width="12" height="14" fill="#e8ecff" stroke="#7a70d8" stroke-width="1.3"/><path d="M15,12.5 H20 M15,16 H20 M15,19.5 H20" stroke="#555" stroke-width="1"/><rect x="12" y="11.5" width="2" height="2" fill="#f0e040" stroke="#6a60b0" stroke-width="0.5"/><rect x="12" y="15" width="2" height="2" fill="#f0e040" stroke="#6a60b0" stroke-width="0.5"/><rect x="12" y="18.5" width="2" height="2" fill="#f0e040" stroke="#6a60b0" stroke-width="0.5"/></svg>
<div class="a" style="left:60px;top:53px;width:1px;height:27px;background:#d0d0d0"></div>
<svg class="ic" style="left:66px;top:55px" width="24" height="24" viewBox="0 0 24 24"><path d="M2,11 L16,6 L20,9 L22,14 L8,19 Z" fill="#fbe8b0" stroke="#f0a040" stroke-width="1.1"/><path d="M5,12 L15,8.5 M6,14.5 L17,11 M7,17 L17,13.5" stroke="#8a7a60" stroke-width="0.8"/><circle cx="18.5" cy="10" r="1.2" fill="#e04040"/><path d="M19,10 Q24,11 22,18" fill="none" stroke="#888" stroke-width="0.8"/></svg>
<div class="a" style="left:98px;top:53px;width:1px;height:27px;background:#d0d0d0"></div>
<svg class="ic" style="left:104px;top:55px" width="24" height="24" viewBox="0 0 24 24"><path d="M8,2 L14,4 L14,18 L8,16 Z" fill="#7a9af0" stroke="#3a5ad0" stroke-width="1"/><path d="M8,2 L12,1 L17,3 L14,4" fill="#c8d8ff" stroke="#3a5ad0" stroke-width="0.8"/><path d="M14,4 L17,3 L17,12" fill="#3a5ad0"/><path d="M12,14 L20,11 L23,13 L23,17 L15,20 L12,18 Z" fill="#5a80f0" stroke="#3a5ad0" stroke-width="1"/><path d="M2,17 L6,22 L13,13" fill="none" stroke="#20a040" stroke-width="2.6"/></svg>
<svg class="ic" style="left:135px;top:55px" width="24" height="24" viewBox="0 0 24 24"><path d="M10,2 L16,1 L14,9 L22,8 L20,14 L10,16 Z" fill="#e8ecff" stroke="#5a6ad8" stroke-width="1.2"/><path d="M6,10 L22,20" stroke="#e8c040" stroke-width="3"/><path d="M6,10 L10,6" stroke="#333" stroke-width="2"/><path d="M2,17 L6,22 L13,13" fill="none" stroke="#20a040" stroke-width="2.6"/></svg>
<svg class="ic" style="left:167px;top:55px" width="24" height="24" viewBox="0 0 24 24"><path d="M6,4 L12,2 L12,18 L6,20 Z" fill="#7a9af0" stroke="#3a5ad0" stroke-width="1"/><path d="M12,6 L18,4 L23,6 L23,17 L17,20 L12,17 Z" fill="#f8c040" stroke="#e09020" stroke-width="1"/><path d="M12,6 L18,4 L23,6 L17,8 Z" fill="#fce090"/><path d="M2,17 L6,22 L13,13" fill="none" stroke="#20a040" stroke-width="2.6"/></svg>
<div class="a" style="left:196px;top:53px;width:1px;height:27px;background:#d0d0d0"></div>
<svg class="ic" style="left:202px;top:55px" width="24" height="24" viewBox="0 0 24 24"><path d="M7.5,1 L13,3.75 L7.5,6.5 L2,3.75 Z" fill="#fce8a0" stroke="#d09030" stroke-width="1"/><path d="M2,3.75 L7.5,6.5 L7.5,12 L2,9.25 Z" fill="#f8d060" stroke="#d09030" stroke-width="1"/><path d="M7.5,6.5 L13,3.75 L13,9.25 L7.5,12 Z" fill="#f0b030" stroke="#d09030" stroke-width="1"/><path d="M14,10 L21,3" stroke="#e8a040" stroke-width="2.5"/><rect x="2" y="14" width="16" height="8" fill="#fff" stroke="#6a4ab0" stroke-width="1.2"/><text x="3.5" y="21" font-family="Liberation Sans" font-size="6" font-weight="bold" fill="#222">ABC</text><path d="M19,14 L24,18 L19,22 Z" fill="#d030c0"/></svg>
<div class="dd" style="left:233px;top:70px"></div>
<div class="a" style="left:245px;top:51px;width:1px;height:32px;background:#d0d0d0"></div>
<div class="grip" style="left:248px;top:53px;height:27px"></div>
<svg class="ic" style="left:256px;top:55px" width="24" height="24" viewBox="0 0 24 24"><path d="M1,17 H8 L13,7 H18 L13,17 H8" fill="#e8e8e8" stroke="#333" stroke-width="1"/><path d="M13,7 L16,7 L22,7 M13,17 L22,17" fill="none" stroke="#333" stroke-width="1"/><path d="M15,7 L18,7 L13,17 Z" fill="#999"/><path d="M1,9 H9 M1,17 H22" stroke="#333" stroke-width="1"/><rect x="1" y="10" width="20" height="6" fill="#ddd" opacity="0.5"/></svg>
<svg class="ic" style="left:282px;top:55px" width="24" height="24" viewBox="0 0 24 24"><path d="M2,10 Q4,20 11,22 Q18,22 22,12" fill="#e8e8e8" stroke="#333" stroke-width="1"/><path d="M7,14 L13,6 L18,6 L13,16 Z" fill="#f4f4f4" stroke="#333" stroke-width="1"/><path d="M13,16 L18,6 L20,10 L15,19 Z" fill="#888" stroke="#333" stroke-width="0.8"/><path d="M2,10 L7,14 L11,21" fill="none" stroke="#333" stroke-width="1"/></svg>
<svg class="ic" style="left:318px;top:55px" width="24" height="24" viewBox="0 0 24 24"><path d="M3,3.5 H8 M4,7.5 H7 M4,17 H7 M3,21 H8" stroke="#111" stroke-width="1.6"/><rect x="3" y="10" width="4" height="4" fill="#e03030"/><path d="M8,12 L14,11 Q16,10 18,11 L19,13 L19,17 L13,18 Q11,16 10,14 L8,13 Z" fill="#f0d8b0" stroke="#a08060" stroke-width="0.8"/><rect x="18.5" y="11.5" width="3.5" height="7" rx="1" fill="#5a6ae0"/></svg>
<div class="dd" style="left:348px;top:70px"></div>
<div class="a" style="left:360px;top:51px;width:1px;height:32px;background:#d0d0d0"></div>
<div class="grip" style="left:363px;top:53px;height:27px"></div>
<svg class="ic" style="left:371px;top:55px" width="24" height="24" viewBox="0 0 24 24"><ellipse cx="12" cy="5" rx="7" ry="2.2" fill="none" stroke="#5a6ad8" stroke-width="1.3"/><ellipse cx="12" cy="8" rx="7" ry="2.2" fill="none" stroke="#5a6ad8" stroke-width="1.3"/><ellipse cx="12" cy="11" rx="7" ry="2.2" fill="none" stroke="#5a6ad8" stroke-width="1.3"/><ellipse cx="12" cy="14" rx="7" ry="2.2" fill="none" stroke="#5a6ad8" stroke-width="1.3"/><ellipse cx="12" cy="17" rx="7" ry="2.2" fill="none" stroke="#5a6ad8" stroke-width="1.3"/><ellipse cx="12" cy="20" rx="7" ry="2.2" fill="none" stroke="#5a6ad8" stroke-width="1.3"/></svg>
<svg class="ic" style="left:402px;top:55px" width="24" height="24" viewBox="0 0 24 24"><path d="M5,2 Q9,0 9,4" fill="none" stroke="#5a6ad8" stroke-width="1.4"/><ellipse cx="8.0" cy="5.0" rx="4" ry="1.6" transform="rotate(-30 8.0 5.0)" fill="none" stroke="#5a6ad8" stroke-width="1.3"/><ellipse cx="9.6" cy="7.5" rx="4" ry="1.6" transform="rotate(-30 9.6 7.5)" fill="none" stroke="#5a6ad8" stroke-width="1.3"/><ellipse cx="11.2" cy="10.0" rx="4" ry="1.6" transform="rotate(-30 11.2 10.0)" fill="none" stroke="#5a6ad8" stroke-width="1.3"/><ellipse cx="12.8" cy="12.5" rx="4" ry="1.6" transform="rotate(-30 12.8 12.5)" fill="none" stroke="#5a6ad8" stroke-width="1.3"/><ellipse cx="14.4" cy="15.0" rx="4" ry="1.6" transform="rotate(-30 14.4 15.0)" fill="none" stroke="#5a6ad8" stroke-width="1.3"/><ellipse cx="16.0" cy="17.5" rx="4" ry="1.6" transform="rotate(-30 16.0 17.5)" fill="none" stroke="#5a6ad8" stroke-width="1.3"/><ellipse cx="17.6" cy="20.0" rx="4" ry="1.6" transform="rotate(-30 17.6 20.0)" fill="none" stroke="#5a6ad8" stroke-width="1.3"/><path d="M18,21 Q19,24 15,23" fill="none" stroke="#5a6ad8" stroke-width="1.4"/></svg>
<svg class="ic" style="left:434px;top:55px" width="24" height="24" viewBox="0 0 24 24"><ellipse cx="12" cy="12" rx="9" ry="10" fill="#f8d860" stroke="#c8a030" stroke-width="1.2"/><ellipse cx="10" cy="12" rx="4" ry="5" fill="#e8c040" stroke="#9a7a20" stroke-width="1"/><path d="M14,3 Q19,12 14,21 M17,4 Q21,12 17,20" fill="none" stroke="#b08a20" stroke-width="0.9"/></svg>
<div class="a" style="left:464px;top:53px;width:1px;height:27px;background:#d0d0d0"></div>
<svg class="ic" style="left:469px;top:55px" width="24" height="24" viewBox="0 0 24 24"><ellipse cx="10" cy="13" rx="6" ry="4" transform="rotate(30 10 13)" fill="none" stroke="#6a7ad8" stroke-width="1.5"/><ellipse cx="15" cy="16" rx="6" ry="4" transform="rotate(30 15 16)" fill="none" stroke="#6a7ad8" stroke-width="1.5"/><path d="M3,3 L19,19 M17,3 L5,14" stroke="#333" stroke-width="1.8"/></svg>
<div class="dd" style="left:499px;top:70px"></div>
<div class="grip" style="left:609px;top:53px;height:27px"></div>
<svg class="ic" style="left:616px;top:55px" width="24" height="24" viewBox="0 0 24 24"><path d="M12,4 L22,21 L2,21 Z" fill="none" stroke="#222" stroke-width="1.4"/></svg>
<svg class="ic" style="left:646px;top:55px" width="24" height="24" viewBox="0 0 24 24"><rect x="2" y="3" width="20" height="16" fill="#f4f4f8" stroke="#888" stroke-width="0.8"/><rect x="2" y="3" width="20" height="3" fill="#7a60d0"/><path d="M2,10 H22 M2,14 H22 M7,6 V19 M12,6 V19 M17,6 V19" stroke="#999" stroke-width="0.7"/><path d="M16,13 L22,22 L10,22 Z" fill="#fff" stroke="#e03030" stroke-width="1.3"/></svg>
<svg class="ic" style="left:677px;top:55px" width="24" height="24" viewBox="0 0 24 24"><path d="M2,4 L9,4 L11,6 L21,6 L22,20 L2,20 Z" fill="#f4e0a0" stroke="#c0a050" stroke-width="0.8"/><path d="M2,8 L22,8 L22,20 L2,20 Z" fill="#f8e8b0" stroke="#c0a050" stroke-width="0.8"/><path d="M14,8 V16 M10,12 H18 M7,15 V21 M4,18 H10 M17,16 V22 M14,19 H20" stroke="#111" stroke-width="1.2"/><circle cx="14" cy="12" r="1.3" fill="#e03030"/><circle cx="7" cy="18" r="1.3" fill="#e03030"/><circle cx="17" cy="19" r="1.3" fill="#e03030"/></svg>
<svg class="ic" style="left:708px;top:55px" width="24" height="24" viewBox="0 0 24 24"><path d="M2,4 L9,4 L11,6 L21,6 L22,20 L2,20 Z" fill="#f4e0a0" stroke="#c0a050" stroke-width="0.8"/><path d="M2,8 L22,8 L22,20 L2,20 Z" fill="#f8e8b0" stroke="#c0a050" stroke-width="0.8"/><circle cx="15" cy="9" r="3.5" fill="none" stroke="#222" stroke-width="1.1"/><circle cx="8" cy="18" r="3.5" fill="none" stroke="#222" stroke-width="1.1"/><circle cx="17" cy="19" r="3.5" fill="none" stroke="#222" stroke-width="1.1"/></svg>
<svg class="ic" style="left:739px;top:55px" width="24" height="24" viewBox="0 0 24 24"><rect x="3" y="3" width="18" height="18" fill="#f0f0f0" stroke="#222" stroke-width="1.4"/><path d="M6,14 H16 M6,17 H12 M6,11 H14" stroke="#222" stroke-width="1"/></svg>
<svg class="ic" style="left:770px;top:55px" width="24" height="24" viewBox="0 0 24 24"><path d="M14,2 L18,5 L12,13 L9,11 Z" fill="#f0d060" stroke="#a08020" stroke-width="0.8"/><path d="M9,11 L12,13 L8,16 Z" fill="#666"/><path d="M2,20 H22 M2,17 V23 M22,17 V23 M4,18 L2,20 L4,22 M20,18 L22,20 L20,22" fill="none" stroke="#c03030" stroke-width="1.2"/></svg>
<div class="a" style="left:801px;top:53px;width:1px;height:27px;background:#d0d0d0"></div>
<svg class="ic" style="left:808px;top:55px" width="24" height="24" viewBox="0 0 24 24"><circle cx="8" cy="7" r="4" fill="#333"/><circle cx="16" cy="6" r="4" fill="#333"/><circle cx="8" cy="7" r="2" fill="#6a80e0"/><circle cx="16" cy="6" r="2" fill="#6a80e0"/><text x="-1" y="23" font-family="Liberation Sans" font-size="11.5" fill="#333" letter-spacing="-0.8">10</text><text x="10" y="23" font-family="Liberation Sans" font-size="11.5" fill="#b02020" letter-spacing="-0.8">H7</text></svg>
<div class="dd" style="left:837px;top:70px"></div>
<div class="a" style="left:849px;top:51px;width:1px;height:32px;background:#d0d0d0"></div>
<div class="grip" style="left:853px;top:53px;height:27px"></div>
<svg class="ic" style="left:861px;top:55px" width="24" height="24" viewBox="0 0 24 24"><path d="M15.0,2 L22,5.5 L15.0,9.0 L8,5.5 Z" fill="#fff0a0" stroke="#c8a030" stroke-width="1"/><path d="M8,5.5 L15.0,9.0 L15.0,16 L8,12.5 Z" fill="#f8d860" stroke="#c8a030" stroke-width="1"/><path d="M15.0,9.0 L22,5.5 L22,12.5 L15.0,16 Z" fill="#e8b830" stroke="#c8a030" stroke-width="1"/><path d="M18.0,9 L24,12.0 L18.0,15.0 L12,12.0 Z" fill="#fff0a0" stroke="#c8a030" stroke-width="1"/><path d="M12,12.0 L18.0,15.0 L18.0,21 L12,18.0 Z" fill="#f8d860" stroke="#c8a030" stroke-width="1"/><path d="M18.0,15.0 L24,12.0 L24,18.0 L18.0,21 Z" fill="#e8b830" stroke="#c8a030" stroke-width="1"/><rect x="3" y="14" width="8" height="7" fill="#f0c840" stroke="#a08020" stroke-width="0.8"/><path d="M4.5,14 V11 Q7,8 9.5,11 V14" fill="none" stroke="#a08020" stroke-width="1.2"/></svg>
<svg class="ic" style="left:891px;top:55px" width="24" height="24" viewBox="0 0 24 24"><path d="M15.0,2 L22,5.5 L15.0,9.0 L8,5.5 Z" fill="#fff0a0" stroke="#c8a030" stroke-width="1"/><path d="M8,5.5 L15.0,9.0 L15.0,16 L8,12.5 Z" fill="#f8d860" stroke="#c8a030" stroke-width="1"/><path d="M15.0,9.0 L22,5.5 L22,12.5 L15.0,16 Z" fill="#e8b830" stroke="#c8a030" stroke-width="1"/><path d="M18.0,9 L24,12.0 L18.0,15.0 L12,12.0 Z" fill="#fff0a0" stroke="#c8a030" stroke-width="1"/><path d="M12,12.0 L18.0,15.0 L18.0,21 L12,18.0 Z" fill="#f8d860" stroke="#c8a030" stroke-width="1"/><path d="M18.0,15.0 L24,12.0 L24,18.0 L18.0,21 Z" fill="#e8b830" stroke="#c8a030" stroke-width="1"/><rect x="3" y="14" width="8" height="7" fill="#f0c840" stroke="#a08020" stroke-width="0.8"/><path d="M4.5,14 V11 Q7,8 9.5,11 V14" fill="none" stroke="#a08020" stroke-width="1.2"/></svg>
<div class="dd" style="left:921px;top:70px"></div>
<div class="a" style="left:-2px;top:90px;width:97px;height:20px;border:1px solid #adadad;background:#fff"></div>
<div class="t" style="left:-1px;top:93px;font-size:12px">择过滤器</div>
<div class="dd" style="left:82px;top:98px"></div>
<div class="a" style="left:102px;top:90px;width:140px;height:20px;border:1px solid #adadad;background:#fff"></div>
<div class="t" style="left:105px;top:93px;font-size:12px">整个装配</div>
<div class="dd" style="left:228px;top:98px"></div>
<svg class="ic" style="left:247px;top:90px" width="20" height="20" viewBox="0 0 24 24"><path d="M4,10 L10,8 L10,20 L4,22 Z M10,8 L16,10 L16,22 L10,20" fill="#f0f0f0" stroke="#b8b8b8" stroke-width="1"/><circle cx="17" cy="8" r="4" fill="#f4f4f4" stroke="#b8b8b8"/><path d="M8,2 V8 M5,5 H11" stroke="#b8b8b8"/></svg>
<div class="a" style="left:271px;top:88px;width:1px;height:24px;background:#d0d0d0"></div>
<svg class="ic" style="left:274px;top:90px" width="20" height="20" viewBox="0 0 24 24"><path d="M3,8 Q8,3 14,8 M3,8 L6,5 M3,8 L7,10" fill="none" stroke="#b8b8b8" stroke-width="1.6"/><path d="M12,12 H22 L18,17 V22 L16,21 V17 Z" fill="#e4e4e4" stroke="#b8b8b8"/></svg>
<svg class="ic" style="left:296px;top:90px" width="20" height="20" viewBox="0 0 24 24"><rect x="1" y="2" width="22" height="20" fill="#fff" stroke="#e03030" stroke-width="1.4"/><path d="M9,5 V13 M5,9 H13" stroke="#222" stroke-width="1"/><circle cx="9" cy="9" r="2" fill="none" stroke="#222"/><path d="M11,13 H21 L17,17 V21 L15,20 V17 Z" fill="#f0b020" stroke="#b07010" stroke-width="0.6"/></svg>
<div class="dd" style="left:319px;top:98px"></div>
<svg class="ic" style="left:332px;top:90px" width="20" height="20" viewBox="0 0 24 24"><path d="M5,8 Q8,2 14,6" fill="none" stroke="#b8b8b8" stroke-width="1.6"/><path d="M5,8 L4,3 M5,8 L9,7" stroke="#b8b8b8" stroke-width="1.4"/><circle cx="14" cy="15" r="4" fill="none" stroke="#b8b8b8"/><path d="M14,8 V22 M7,15 H21" stroke="#b8b8b8"/></svg>
<svg class="ic" style="left:353px;top:90px" width="20" height="20" viewBox="0 0 24 24"><path d="M2,6 Q6,2 10,6 L8,10" fill="none" stroke="#b8b8b8" stroke-width="2"/><rect x="12" y="8" width="8" height="14" fill="#f4f4f4" stroke="#b8b8b8"/><path d="M12,12 H20 M12,16 H20 M16,8 V22" stroke="#b8b8b8"/></svg>
<div class="a" style="left:378px;top:88px;width:1px;height:24px;background:#d0d0d0"></div>
<svg class="ic" style="left:382px;top:90px" width="20" height="20" viewBox="0 0 24 24"><rect x="3" y="4" width="17" height="16" fill="none" stroke="#222" stroke-width="1.2" stroke-dasharray="2 1.6"/><circle cx="3" cy="4" r="1.6" fill="#e03030"/><circle cx="20" cy="20" r="1.6" fill="#e03030"/></svg>
<div class="dd" style="left:406px;top:98px"></div>
<div class="a" style="left:418px;top:88px;width:1px;height:24px;background:#d0d0d0"></div>
<svg class="ic" style="left:423px;top:90px" width="20" height="20" viewBox="0 0 24 24"><path d="M2,14 L8,6 L18,4 L22,10 L20,18 L8,20 Z" fill="#e8e8e8" stroke="#555" stroke-width="1"/><path d="M8,6 L12,14 L22,10 M12,14 L8,20" fill="none" stroke="#555" stroke-width="0.9"/><path d="M10,8 L16,7" stroke="#e03030" stroke-width="1.5"/></svg>
<svg class="ic" style="left:446px;top:90px" width="20" height="20" viewBox="0 0 24 24"><path d="M12.0,2 L22,7.0 L12.0,12.0 L2,7.0 Z" fill="#c8e0ff" stroke="#5a90d8" stroke-width="1"/><path d="M2,7.0 L12.0,12.0 L12.0,22 L2,17.0 Z" fill="#a0c8f8" stroke="#5a90d8" stroke-width="1"/><path d="M12.0,12.0 L22,7.0 L22,17.0 L12.0,22 Z" fill="#70a8f0" stroke="#5a90d8" stroke-width="1"/><path d="M12,6 L20,14" stroke="#e03030" stroke-width="0.8" stroke-dasharray="1.5 1"/></svg>
<div class="a" style="left:471px;top:88px;width:1px;height:24px;background:#d0d0d0"></div>
<div class="sel" style="left:474px;top:89px;width:23px;height:22px"></div>
<div class="sel" style="left:497px;top:89px;width:23px;height:22px"></div>
<div class="sel" style="left:520px;top:89px;width:23px;height:22px"></div>
<div class="sel" style="left:566px;top:89px;width:23px;height:22px"></div>
<div class="sel" style="left:612px;top:89px;width:23px;height:22px"></div>
<div class="sel" style="left:658px;top:89px;width:23px;height:22px"></div>
<div class="sel" style="left:681px;top:89px;width:23px;height:22px"></div>
<svg class="ic" style="left:476px;top:90px" width="20" height="20" viewBox="0 0 24 24"><path d="M12,4 L20,12 L12,20 L4,12 Z" fill="none" stroke="#222" stroke-width="1.1"/><circle cx="12" cy="12" r="2.2" fill="#f8e000"/><circle cx="12" cy="3.5" r="1.8" fill="#fff" stroke="#222"/><circle cx="12" cy="20.5" r="1.8" fill="#fff" stroke="#222"/><circle cx="3.5" cy="12" r="1.8" fill="#fff" stroke="#222"/><circle cx="20.5" cy="12" r="1.8" fill="#fff" stroke="#222"/><path d="M0,4 L4,7 L0,9 Z" fill="#20a040"/><path d="M0,15 L4,17 L0,20 Z" fill="#e03030"/></svg>
<svg class="ic" style="left:498px;top:90px" width="20" height="20" viewBox="0 0 24 24"><path d="M4,21 L19,6" stroke="#222" stroke-width="1.1"/><circle cx="19" cy="6" r="2.5" fill="#e03030"/></svg>
<svg class="ic" style="left:522px;top:90px" width="20" height="20" viewBox="0 0 24 24"><path d="M4,21 L20,5" stroke="#222" stroke-width="1.1"/><circle cx="12" cy="13" r="2.5" fill="#e03030"/></svg>
<svg class="ic" style="left:544px;top:90px" width="20" height="20" viewBox="0 0 24 24"><path d="M3,4 Q10,3 11,12 Q12,21 21,20" fill="none" stroke="#222" stroke-width="1.4"/><circle cx="11" cy="12" r="2.5" fill="#e03030"/></svg>
<svg class="ic" style="left:568px;top:90px" width="20" height="20" viewBox="0 0 24 24"><path d="M4,14 L9,4 L14,16 L19,9 L17,19" fill="none" stroke="#9030c0" stroke-width="1.3"/><path d="M4,14 Q12,16 19,12" fill="none" stroke="#222" stroke-width="1"/><circle cx="4" cy="14" r="2.2" fill="#e03030"/><circle cx="9" cy="4" r="2.2" fill="#e03030"/><circle cx="14" cy="16" r="2.2" fill="#e03030"/><circle cx="19" cy="9" r="2.2" fill="#e03030"/><circle cx="17" cy="19" r="2.2" fill="#e03030"/></svg>
<svg class="ic" style="left:590px;top:90px" width="20" height="20" viewBox="0 0 24 24"><path d="M2,17 Q12,4 22,17 M12,2 V22" fill="none" stroke="#222" stroke-width="1.3"/><circle cx="12" cy="9" r="2.2" fill="#e03030"/></svg>
<svg class="ic" style="left:614px;top:90px" width="20" height="20" viewBox="0 0 24 24"><circle cx="12" cy="12" r="8.5" fill="none" stroke="#222" stroke-width="1.5"/><circle cx="12" cy="12" r="2.3" fill="#e03030"/></svg>
<svg class="ic" style="left:637px;top:90px" width="20" height="20" viewBox="0 0 24 24"><circle cx="12" cy="12" r="8" fill="none" stroke="#222" stroke-width="1.2"/><circle cx="19.020660495122982" cy="15.835404308833624" r="2" fill="#e03030"/><circle cx="7.961231163201139" cy="18.90567493319099" r="2" fill="#e03030"/><circle cx="4.825932669326824" cy="8.45983645364118" r="2" fill="#e03030"/><circle cx="15.748133370403018" cy="4.932362754238775" r="2" fill="#e03030"/></svg>
<svg class="ic" style="left:660px;top:90px" width="20" height="20" viewBox="0 0 24 24"><path d="M12,2 V22 M2,12 H22" stroke="#222" stroke-width="1.1"/><circle cx="12" cy="12" r="2" fill="#e03030"/></svg>
<svg class="ic" style="left:682px;top:90px" width="20" height="20" viewBox="0 0 24 24"><path d="M4,20 L20,4" stroke="#222" stroke-width="1.1"/><circle cx="7" cy="17" r="2.2" fill="#e03030"/></svg>
<svg class="ic" style="left:704px;top:90px" width="20" height="20" viewBox="0 0 24 24"><path d="M2,8 Q10,2 20,4 Q14,10 18,20 Q10,18 4,20 Q1,14 2,8 Z" fill="#b8d4f4" stroke="#7a9ad8" stroke-width="1"/><path d="M4,19 Q2,13 6,9 Q12,6 18,5" fill="none" stroke="#fff" stroke-width="2"/><circle cx="14" cy="8" r="2" fill="#e03030"/></svg>
<div class="a" style="left:730px;top:88px;width:1px;height:24px;background:#d0d0d0"></div>
<svg class="ic" style="left:734px;top:91px" width="18" height="18" viewBox="0 0 24 24"><path d="M5,3 L19,6 L19,21 L5,18 Z" fill="none" stroke="#222" stroke-width="1.1"/><path d="M5,8 L19,11 M5,13 L19,16 M10,4 V19 M14,5 V20" stroke="#222" stroke-width="0.9"/><circle cx="12" cy="12" r="1.5" fill="#e03030"/></svg>
<div class="dd" style="left:-2px;top:786px"></div>
<svg class="ic" style="left:11px;top:779px" width="24" height="24" viewBox="0 0 24 24"><path d="M3,7 L9,3 L14,5 L14,9 L20,11 L20,22 L12,26 L3,21 Z" fill="#e4e8ee" stroke="#5a50c0" stroke-width="1.3"/><path d="M3,7 L9,10 L14,9 M9,10 V24 M9,17 L20,11 M3,14 L9,17 M14,13 V20" fill="none" stroke="#8a8a9a" stroke-width="0.8" stroke-dasharray="1.5 1"/></svg>
<svg class="ic" style="left:42px;top:779px" width="24" height="24" viewBox="0 0 24 24"><rect x="2" y="3" width="20" height="22" fill="#f0f0f0" stroke="#c0c0c0" stroke-width="1.2"/><path d="M10.0,7 L14,9.0 L10.0,11.0 L6,9.0 Z" fill="#f4f4f4" stroke="#c0c0c0" stroke-width="1"/><path d="M6,9.0 L10.0,11.0 L10.0,15 L6,13.0 Z" fill="#e4e4e4" stroke="#c0c0c0" stroke-width="1"/><path d="M10.0,11.0 L14,9.0 L14,13.0 L10.0,15 Z" fill="#d8d8d8" stroke="#c0c0c0" stroke-width="1"/><path d="M15.0,12 L19,14.0 L15.0,16.0 L11,14.0 Z" fill="#f4f4f4" stroke="#c0c0c0" stroke-width="1"/><path d="M11,14.0 L15.0,16.0 L15.0,20 L11,18.0 Z" fill="#e4e4e4" stroke="#c0c0c0" stroke-width="1"/><path d="M15.0,16.0 L19,14.0 L19,18.0 L15.0,20 Z" fill="#d8d8d8" stroke="#c0c0c0" stroke-width="1"/></svg>
<svg class="ic" style="left:71px;top:779px" width="24" height="24" viewBox="0 0 24 24"><path d="M5.5,3 L10,5.25 L5.5,7.5 L1,5.25 Z" fill="#fff6c8" stroke="#e8a030" stroke-width="1"/><path d="M1,5.25 L5.5,7.5 L5.5,12 L1,9.75 Z" fill="#f8e888" stroke="#e8a030" stroke-width="1"/><path d="M5.5,7.5 L10,5.25 L10,9.75 L5.5,12 Z" fill="#f0cc50" stroke="#e8a030" stroke-width="1"/><path d="M5.5,13 L10,15.25 L5.5,17.5 L1,15.25 Z" fill="#fff6c8" stroke="#e8a030" stroke-width="1"/><path d="M1,15.25 L5.5,17.5 L5.5,22 L1,19.75 Z" fill="#f8e888" stroke="#e8a030" stroke-width="1"/><path d="M5.5,17.5 L10,15.25 L10,19.75 L5.5,22 Z" fill="#f0cc50" stroke="#e8a030" stroke-width="1"/><path d="M14.5,13 L19,15.25 L14.5,17.5 L10,15.25 Z" fill="#fff6c8" stroke="#e8a030" stroke-width="1"/><path d="M10,15.25 L14.5,17.5 L14.5,22 L10,19.75 Z" fill="#f8e888" stroke="#e8a030" stroke-width="1"/><path d="M14.5,17.5 L19,15.25 L19,19.75 L14.5,22 Z" fill="#f0cc50" stroke="#e8a030" stroke-width="1"/><path d="M18,1 V10 M13.5,5.5 H22.5" stroke="#2060e0" stroke-width="2.2"/></svg>
<div class="dd" style="left:103px;top:788px"></div>
<svg class="ic" style="left:116px;top:779px" width="24" height="24" viewBox="0 0 24 24"><path d="M12.5,6 L18,8.75 L12.5,11.5 L7,8.75 Z" fill="#fff6c8" stroke="#e8a030" stroke-width="1"/><path d="M7,8.75 L12.5,11.5 L12.5,17 L7,14.25 Z" fill="#f8e888" stroke="#e8a030" stroke-width="1"/><path d="M12.5,11.5 L18,8.75 L18,14.25 L12.5,17 Z" fill="#f0cc50" stroke="#e8a030" stroke-width="1"/><path d="M16,5 L21,2 M18,1 H22 V5 M3,22 L8,18 M2,18 V23 H7" fill="none" stroke="#2060e0" stroke-width="1.1" stroke-dasharray="1.5 1"/></svg>
<svg class="ic" style="left:147px;top:779px" width="24" height="24" viewBox="0 0 24 24"><path d="M2,2 L11,8 L2,14 Z" fill="#3a40d0"/><path d="M22,2 L13,8 L22,14 Z" fill="#3a40d0"/><path d="M12,0 V26" stroke="#222" stroke-width="1" stroke-dasharray="2 1"/><rect x="2" y="16" width="8" height="9" fill="#f8e060" stroke="#a08020" stroke-width="0.8"/><path d="M14,14 L23,24 L14,24 Z" fill="#d83040"/></svg>
<svg class="ic" style="left:177px;top:779px" width="24" height="24" viewBox="0 0 24 24"><path d="M2,4 L8,9 L2,14 Z" fill="#20b040"/><path d="M5,14 L11,19 L5,24 Z" fill="#e03030"/><path d="M18,1 V10 M13,10 H23 M13,25 L22,16 M16,25 L24,17" stroke="#9040b0" stroke-width="1.3"/></svg>
<div class="a" style="left:208px;top:778px;width:1px;height:24px;background:#d0d0d0"></div>
<svg class="ic" style="left:214px;top:779px" width="24" height="24" viewBox="0 0 24 24"><path d="M2,24 L10,14 Q8,10 12,9 Q16,9 15,13 L7,24" fill="#f0d070" stroke="#b09040" stroke-width="1"/><rect x="13" y="1" width="7" height="7" fill="#fce8a0" stroke="#6a6ab0"/><rect x="10" y="8" width="7" height="7" fill="#fce8a0" stroke="#6a6ab0"/><rect x="17" y="8" width="7" height="7" fill="#fce8a0" stroke="#6a6ab0"/></svg>
<svg class="ic" style="left:246px;top:779px" width="24" height="24" viewBox="0 0 24 24"><path d="M6.5,2 L11,4.25 L6.5,6.5 L2,4.25 Z" fill="#fff6c8" stroke="#e8a030" stroke-width="1"/><path d="M2,4.25 L6.5,6.5 L6.5,11 L2,8.75 Z" fill="#f8e888" stroke="#e8a030" stroke-width="1"/><path d="M6.5,6.5 L11,4.25 L11,8.75 L6.5,11 Z" fill="#f0cc50" stroke="#e8a030" stroke-width="1"/><path d="M6.5,13 L11,15.25 L6.5,17.5 L2,15.25 Z" fill="#fff6c8" stroke="#e8a030" stroke-width="1"/><path d="M2,15.25 L6.5,17.5 L6.5,22 L2,19.75 Z" fill="#f8e888" stroke="#e8a030" stroke-width="1"/><path d="M6.5,17.5 L11,15.25 L11,19.75 L6.5,22 Z" fill="#f0cc50" stroke="#e8a030" stroke-width="1"/><path d="M16.5,13 L21,15.25 L16.5,17.5 L12,15.25 Z" fill="#fff6c8" stroke="#e8a030" stroke-width="1"/><path d="M12,15.25 L16.5,17.5 L16.5,22 L12,19.75 Z" fill="#f8e888" stroke="#e8a030" stroke-width="1"/><path d="M16.5,17.5 L21,15.25 L21,19.75 L16.5,22 Z" fill="#f0cc50" stroke="#e8a030" stroke-width="1"/></svg>
<svg class="ic" style="left:276px;top:779px" width="24" height="24" viewBox="0 0 24 24"><rect x="15" y="1" width="7" height="7" fill="#fff" stroke="#222" stroke-width="1.1"/><rect x="9" y="8" width="7" height="7" fill="#fff" stroke="#222" stroke-width="1.1"/><rect x="3" y="15" width="7" height="7" fill="#f8e060" stroke="#e03030" stroke-width="1.4"/></svg>
<div class="a" style="left:308px;top:778px;width:1px;height:24px;background:#d0d0d0"></div>
<svg class="ic" style="left:313px;top:779px" width="24" height="24" viewBox="0 0 24 24"><path d="M13.0,2 L23,7.0 L13.0,12.0 L3,7.0 Z" fill="#e8e8e8" stroke="#555" stroke-width="1"/><path d="M3,7.0 L13.0,12.0 L13.0,22 L3,17.0 Z" fill="#b8b8b8" stroke="#555" stroke-width="1"/><path d="M13.0,12.0 L23,7.0 L23,17.0 L13.0,22 Z" fill="#888" stroke="#555" stroke-width="1"/><path d="M2,18 L14,12 L18,18 L6,24 Z" fill="#f8b060" stroke="#e07030" stroke-width="1"/><path d="M6,18 L13,15 M7,21 L14,18" stroke="#fff" stroke-width="0.8"/></svg>
<div class="a" style="left:345px;top:778px;width:1px;height:24px;background:#d0d0d0"></div>
<svg class="ic" style="left:351px;top:779px" width="24" height="24" viewBox="0 0 24 24"><ellipse cx="10" cy="9" rx="4.5" ry="7" fill="none" stroke="#c8b040" stroke-width="2.2"/><ellipse cx="14" cy="17" rx="4.5" ry="7" fill="none" stroke="#c8b040" stroke-width="2.2"/></svg>
<svg class="ic" style="left:381px;top:779px" width="24" height="24" viewBox="0 0 24 24"><rect x="6" y="2" width="17" height="5" fill="#f4f4f4" stroke="#444" stroke-width="1"/><path d="M3,4 V12 M1,10 L3,13 L5,10" fill="none" stroke="#444" stroke-width="1"/><ellipse cx="14" cy="14" rx="3" ry="5" fill="none" stroke="#c8b040" stroke-width="2"/><ellipse cx="16" cy="20" rx="3" ry="5" fill="none" stroke="#c8b040" stroke-width="2"/></svg>
<svg class="ic" style="left:413px;top:779px" width="24" height="24" viewBox="0 0 24 24"><path d="M2,12 Q8,12 10,6 L12,3 M2,12 Q8,12 10,18 L12,21 M2,12 H12" fill="none" stroke="#5a80d8" stroke-width="1.5"/><rect x="12" y="1" width="10" height="4" rx="2" fill="#c8d8ff" stroke="#5a80d8"/><rect x="12" y="10" width="10" height="4" rx="2" fill="#c8d8ff" stroke="#5a80d8"/><rect x="14" y="17" width="9" height="9" fill="#fff" stroke="#3a40c0" stroke-width="1.2"/><path d="M18.5,19 V20 M18.5,21 V25" stroke="#3a40c0" stroke-width="1.4"/></svg>
<svg class="ic" style="left:461px;top:777px" width="11" height="8" viewBox="0 0 11 8"><path d="M1,1 L4,4 L1,7 M5.5,1 L8.5,4 L5.5,7" fill="none" stroke="#111" stroke-width="1.6"/></svg>
<div class="dd" style="left:462px;top:795px"></div>
<div class="a" style="left:475px;top:778px;width:1px;height:24px;background:#d0d0d0"></div>
<div class="grip" style="left:478px;top:778px;height:24px"></div>
<svg class="ic" style="left:487px;top:779px" width="24" height="24" viewBox="0 0 24 24"><path d="M2,3 L18,7 L18,25 L2,21 Z" fill="#f4f4f4" stroke="#333" stroke-width="1.2"/><rect x="5" y="8" width="5" height="5" fill="none" stroke="#333"/><rect x="5" y="15" width="5" height="5" fill="none" stroke="#333"/><rect x="11" y="12" width="5" height="8" fill="none" stroke="#333"/><path d="M19,1 L20,5 L24,5 L21,8 L23,12 L19,9 L15,12 L17,8 L14,5 L18,5 Z" fill="#f8e040"/></svg>
<div class="a" style="left:517px;top:779px;width:24px;height:24px;background:linear-gradient(#eeeeee,#cfcfcf);border:1px solid #c4c4c4"></div>
<svg class="ic" style="left:517px;top:779px" width="24" height="24" viewBox="0 0 24 24"><path d="M3,6 Q9,2 17,3 L21,13 Q14,12 8,17 Z" fill="#f4f4f4" stroke="#9a9a9a" stroke-width="0.8"/><rect x="4.5" y="4.5" width="2" height="2" fill="#8a8a8a"/><rect x="8.3" y="4.2" width="2" height="2" fill="#8a8a8a"/><rect x="12.1" y="3.9" width="2" height="2" fill="#8a8a8a"/><rect x="15.899999999999999" y="3.6" width="2" height="2" fill="#8a8a8a"/><rect x="5.3" y="7.7" width="2" height="2" fill="#8a8a8a"/><rect x="9.100000000000001" y="7.4" width="2" height="2" fill="#8a8a8a"/><rect x="12.9" y="7.1000000000000005" width="2" height="2" fill="#8a8a8a"/><rect x="16.7" y="6.800000000000001" width="2" height="2" fill="#8a8a8a"/><rect x="6.1" y="10.9" width="2" height="2" fill="#8a8a8a"/><rect x="9.9" y="10.6" width="2" height="2" fill="#8a8a8a"/><rect x="13.7" y="10.3" width="2" height="2" fill="#8a8a8a"/><rect x="17.5" y="10.0" width="2" height="2" fill="#8a8a8a"/><rect x="6.9" y="14.100000000000001" width="2" height="2" fill="#8a8a8a"/><rect x="10.700000000000001" y="13.8" width="2" height="2" fill="#8a8a8a"/><rect x="14.5" y="13.500000000000002" width="2" height="2" fill="#8a8a8a"/><rect x="18.299999999999997" y="13.200000000000001" width="2" height="2" fill="#8a8a8a"/><path d="M3,6 L9,24" stroke="#888" stroke-width="1"/></svg>
<div class="t" style="left:544px;top:783px;font-size:11px;color:#b8b8b8">完成草图</div>
<svg class="ic" style="left:590px;top:776px" width="36" height="26" viewBox="590 776 36 26"><path d="M598,780 V792 Q598,798 603,798 Q608,798 608,792 Q608,786 612.5,786 Q617,786 617,792 V798" fill="none" stroke="#222" stroke-width="1.2"/><circle cx="599" cy="791.6" r="2" fill="#e03030"/><circle cx="608" cy="791.6" r="2" fill="#e03030"/><circle cx="617" cy="791.6" r="2" fill="#e03030"/></svg>
<svg class="ic" style="left:627px;top:779px" width="24" height="24" viewBox="0 0 24 24"><path d="M3,21 L21,3" stroke="#222" stroke-width="1.4"/><circle cx="3" cy="21" r="2.2" fill="#e03030"/><circle cx="21" cy="3" r="2.2" fill="#e03030"/></svg>
<svg class="ic" style="left:658px;top:779px" width="24" height="24" viewBox="0 0 24 24"><path d="M3,3 Q17,4 20,21" fill="none" stroke="#222" stroke-width="1.4"/><circle cx="3" cy="3" r="2.2" fill="#e03030"/><circle cx="15" cy="8" r="2.2" fill="#e03030"/><circle cx="20" cy="21" r="2.2" fill="#e03030"/></svg>
<svg class="ic" style="left:689px;top:779px" width="24" height="24" viewBox="0 0 24 24"><circle cx="12" cy="13" r="10" fill="none" stroke="#222" stroke-width="1.4"/></svg>
<svg class="ic" style="left:720px;top:779px" width="24" height="24" viewBox="0 0 24 24"><path d="M2,4 H12 Q20,4 20,14 V26" fill="none" stroke="#aaa" stroke-width="1.2"/><path d="M14,4 H20 V12" fill="none" stroke="#bbb" stroke-width="0.8" stroke-dasharray="1 1"/></svg>
<svg class="ic" style="left:750px;top:779px" width="24" height="24" viewBox="0 0 24 24"><path d="M2,4 H14 L20,11 V26" fill="none" stroke="#aaa" stroke-width="1.2"/><path d="M14,4 H20 V11" fill="none" stroke="#bbb" stroke-width="0.8" stroke-dasharray="1 1"/></svg>
<svg class="ic" style="left:782px;top:779px" width="24" height="24" viewBox="0 0 24 24"><rect x="3" y="6" width="18" height="14" fill="none" stroke="#222" stroke-width="1.4"/><circle cx="3" cy="6" r="2.2" fill="#e03030"/><circle cx="21" cy="20" r="2.2" fill="#e03030"/></svg>
<svg class="ic" style="left:812px;top:779px" width="24" height="24" viewBox="0 0 24 24"><path d="M3,12 L9,10 L14,17 L21,11" fill="none" stroke="#222" stroke-width="1.2"/><path d="M6,12 L9,3 M14,17 L14,23" stroke="#999" stroke-width="1"/><circle cx="3" cy="12" r="2.2" fill="#999"/><circle cx="9" cy="10" r="2.2" fill="#e03030"/><circle cx="9" cy="3" r="2.2" fill="#999"/><circle cx="14" cy="17" r="2.2" fill="#e03030"/><circle cx="21" cy="11" r="2.2" fill="#999"/><circle cx="14" cy="23" r="2.2" fill="#999"/></svg>
<svg class="ic" style="left:845px;top:779px" width="24" height="24" viewBox="0 0 24 24"><path d="M12,3 V23 M2,13 H22" stroke="#222" stroke-width="1.5"/></svg>
<svg class="ic" style="left:874px;top:779px" width="24" height="24" viewBox="0 0 24 24"><path d="M3,14 Q3,7 10,7 Q12,3 16,4 Q21,5 20,10 Q23,13 22,17 Q21,22 14,22 L8,22 Q3,21 3,14 Z" fill="none" stroke="#a8a8a8" stroke-width="1.1"/><path d="M6,14 Q6,10 11,10 Q13,7 16,7.5 Q18,8 17.5,11 Q20,13 19,16 Q18.5,19 14,19 L9,19 Q6,18.5 6,14 Z" fill="none" stroke="#b0b0b0" stroke-width="1"/></svg>
<div class="dd" style="left:906px;top:788px"></div>
<div class="a" style="left:917px;top:778px;width:1px;height:24px;background:#d0d0d0"></div>
<svg class="ic" style="left:923px;top:779px" width="24" height="24" viewBox="0 0 24 24"><path d="M4,2 L16,26 M2,16 H20" stroke="#a8a8a8" stroke-width="1.2"/><path d="M14,14 L20,8 L23,10 L17,16 Z" fill="#e8e8e8" stroke="#a8a8a8"/><path d="M14,20 H22" stroke="#a8a8a8" stroke-dasharray="1 1"/></svg>
<svg class="ic" style="left:954px;top:779px" width="24" height="24" viewBox="0 0 24 24"><path d="M4,2 L16,26 M2,16 H14" stroke="#a8a8a8" stroke-width="1.2"/><path d="M12,18 L20,8 L23,10 L15,20 Z" fill="#e8e8e8" stroke="#a8a8a8"/></svg>
<svg class="ic" style="left:986px;top:779px" width="24" height="24" viewBox="0 0 24 24"><path d="M2,10 L20,18 M14,4 V26" stroke="#a8a8a8" stroke-width="1.2"/><path d="M14,8 H22 M14,4 V12" stroke="#a8a8a8" stroke-dasharray="1 1"/></svg>
<div class="a" style="left:1017px;top:778px;width:1px;height:24px;background:#d0d0d0"></div>
<svg class="ic" style="left:1022px;top:779px" width="24" height="24" viewBox="0 0 24 24"><path d="M2,6 V20 M22,6 V20 M2,13 H22 M4,11 L2,13 L4,15 M20,11 L22,13 L20,15" fill="none" stroke="#a8a8a8" stroke-width="1.1"/><path d="M14,2 L9,12 L13,12 L9,22 L16,10 L12,10 L16,2 Z" fill="#e0e0e0" stroke="#a8a8a8" stroke-width="0.8"/></svg>
<div class="dd" style="left:1053px;top:788px"></div>
<div class="a" style="left:1065px;top:778px;width:1px;height:24px;background:#d0d0d0"></div>
<svg class="ic" style="left:1069px;top:779px" width="24" height="24" viewBox="0 0 24 24"><path d="M2,18 L10,10 M6,20 L14,12 M16,16 V25 M11,25 H21" stroke="#a8a8a8" stroke-width="1.2"/></svg>
<svg class="ic" style="left:1102px;top:779px" width="24" height="24" viewBox="0 0 24 24"><path d="M6,4 H3 V25 H6 M18,4 H21 V25 H18 M12,2 V26" fill="none" stroke="#a8a8a8" stroke-width="1.2" stroke-dasharray="30 0"/><path d="M8,4 V12 M16,4 V12 M6,6 L8,4 L10,6 M14,6 L16,4 L18,6 M8,12 H16" fill="none" stroke="#a8a8a8" stroke-width="1"/></svg>
<svg class="ic" style="left:1134px;top:779px" width="24" height="24" viewBox="0 0 24 24"><path d="M3,8 L8,12 L3,16 Z" fill="#d0d0d0"/><path d="M8,18 L18,6 M11,20 L21,8 M13,16 V26" stroke="#a8a8a8" stroke-width="1.2"/></svg>
<div class="dd" style="left:1164px;top:788px"></div>
<div class="a" style="left:1176px;top:778px;width:1px;height:24px;background:#d0d0d0"></div>
<svg class="ic" style="left:1178px;top:779px" width="24" height="24" viewBox="0 0 24 24"><rect x="2" y="2" width="14" height="10" fill="none" stroke="#a8a8a8"/><path d="M4,16 H10 V22" fill="none" stroke="#a8a8a8"/></svg>
</body></html>
